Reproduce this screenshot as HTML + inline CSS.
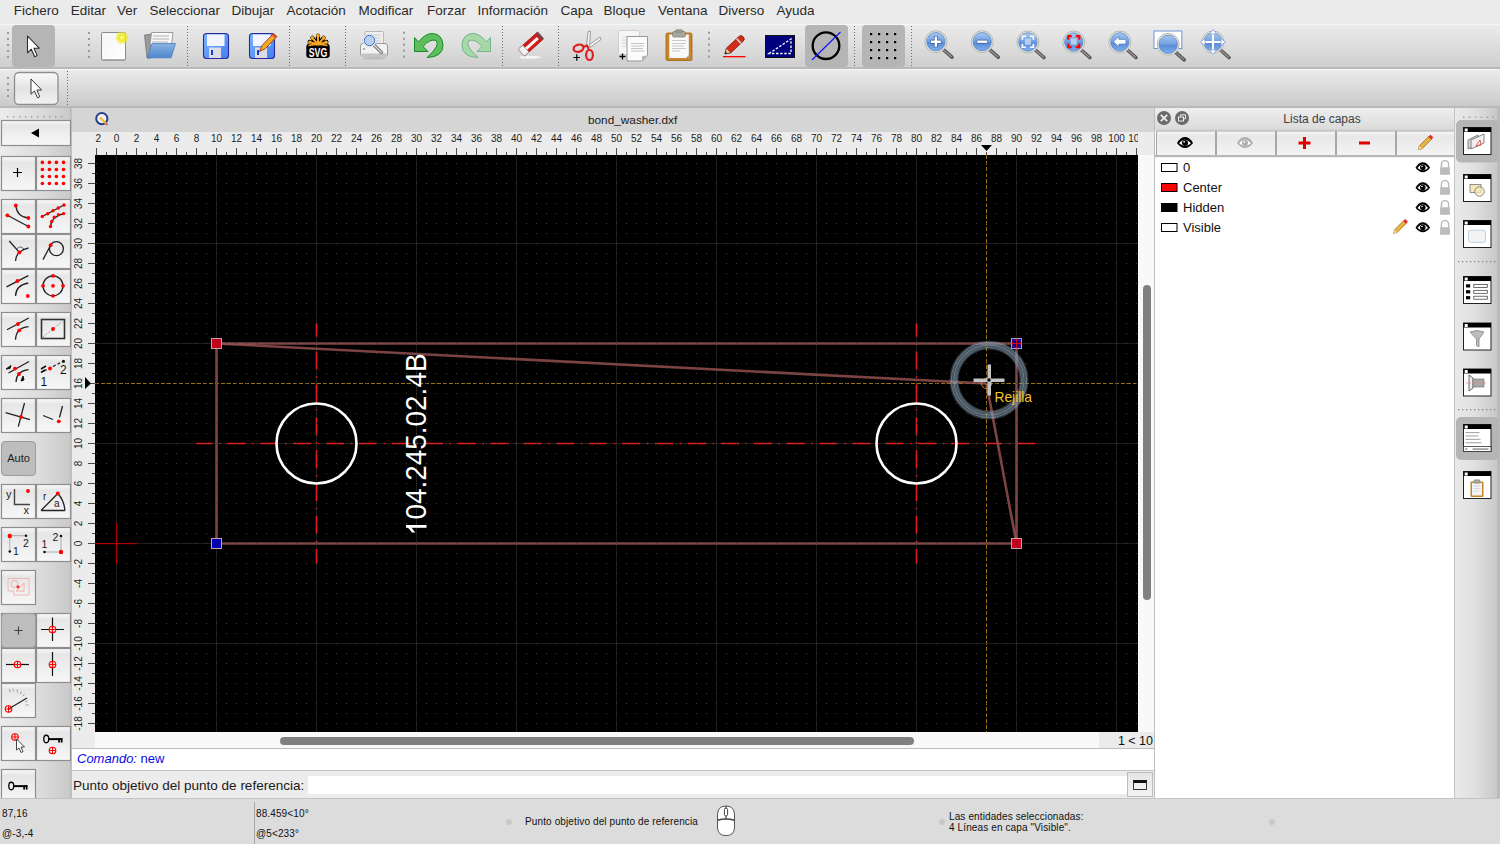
<!DOCTYPE html>
<html><head><meta charset="utf-8"><title>LibreCAD</title>
<style>
*{box-sizing:border-box}
html,body{margin:0;padding:0}
body{width:1500px;height:844px;overflow:hidden;position:relative;background:#ececec;font-family:"Liberation Sans",sans-serif;}
.abs{position:absolute}
#menubar{position:absolute;left:0;top:0;width:1500px;height:24px;background:#ebebeb}
.mi{position:absolute;top:2.8px;font-size:13.5px;line-height:16px;color:#2a2a2a;white-space:nowrap}
#tb1{position:absolute;left:0;top:24px;width:1500px;height:45px;background:linear-gradient(#f6f6f6 0px,#f6f6f6 1px,#ebebeb 1px,#cfcfcf 43px,#b9b9b9 43px,#b9b9b9 45px)}
#tb2{position:absolute;left:0;top:69px;width:1500px;height:39px;background:linear-gradient(#f6f6f6 0px,#f6f6f6 1px,#ebebeb 1px,#cacaca 37px,#b9b9b9 37px,#b9b9b9 39px)}
.handle{position:absolute;width:3px;background:radial-gradient(circle,#8a8a8a 0.9px,transparent 1.2px);background-size:3px 5.3px}
.vsep{position:absolute;width:2px;background:repeating-linear-gradient(#7a7a7a 0px,#7a7a7a 1px,transparent 1px,transparent 3px)}
.act{position:absolute;background:#b5b5b5;border-radius:4px}
#left{position:absolute;left:0;top:108px;width:72px;height:690px;background:linear-gradient(90deg,#e6e6e6,#d9d9d9 40px,#c8c8c8 69px,#b8b8b8 70px,#c2c2c2 72px)}
.lb{position:absolute;width:35px;height:35px;border:1px solid #8f8f8f;background:linear-gradient(#ffffff,#ececec)}
#mdi{position:absolute;left:72px;top:108px;width:1084px;height:690px;background:#ececec}
#dock{position:absolute;left:1155px;top:108px;width:300px;height:690px;background:#fff}
#rtb{position:absolute;left:1454px;top:108px;width:46px;height:690px;background:linear-gradient(90deg,#c9c9c9 0px,#e9e9e9 1px,#e2e2e2 20px,#cdcdcd 43px,#b9b9b9 46px)}
#status{position:absolute;left:0;top:797px;width:1500px;height:47px;background:#dcdcdc}
</style></head>
<body>
<div id="menubar"><span class="mi" style="left:13.7px">Fichero</span><span class="mi" style="left:70.7px">Editar</span><span class="mi" style="left:117.0px">Ver</span><span class="mi" style="left:149.5px">Seleccionar</span><span class="mi" style="left:231.4px">Dibujar</span><span class="mi" style="left:286.6px">Acotación</span><span class="mi" style="left:358.6px">Modificar</span><span class="mi" style="left:427.0px">Forzar</span><span class="mi" style="left:477.4px">Información</span><span class="mi" style="left:560.4px">Capa</span><span class="mi" style="left:603.4px">Bloque</span><span class="mi" style="left:658.0px">Ventana</span><span class="mi" style="left:718.6px">Diverso</span><span class="mi" style="left:776.6px">Ayuda</span></div>
<div id="tb1"></div><div id="tb2"></div>
<svg class="abs" style="left:0;top:0" width="1500" height="108">
<defs><linearGradient id="lens" x1="0" y1="0" x2="0" y2="1"><stop offset="0" stop-color="#a8c8f0"/><stop offset="0.5" stop-color="#6f9fe0"/><stop offset="0.55" stop-color="#5a8ad6"/><stop offset="1" stop-color="#7fb0ec"/></linearGradient><linearGradient id="flop" x1="0" y1="0" x2="1" y2="1"><stop offset="0" stop-color="#7fb4ff"/><stop offset="1" stop-color="#3f7ff0"/></linearGradient><linearGradient id="folder" x1="0" y1="0" x2="0" y2="1"><stop offset="0" stop-color="#8ab4e4"/><stop offset="1" stop-color="#4f86cc"/></linearGradient><linearGradient id="page" x1="0" y1="0" x2="1" y2="1"><stop offset="0" stop-color="#f4f4f4"/><stop offset="1" stop-color="#ffffff"/></linearGradient><radialGradient id="glow"><stop offset="0" stop-color="#ffffe0"/><stop offset="0.35" stop-color="#f2ec20"/><stop offset="0.7" stop-color="#efe820" stop-opacity="0.7"/><stop offset="1" stop-color="#f0e820" stop-opacity="0"/></radialGradient></defs>
<rect x="7" y="32" width="2" height="2" fill="#9a9a9a"/><rect x="7" y="38" width="2" height="2" fill="#9a9a9a"/><rect x="7" y="44" width="2" height="2" fill="#9a9a9a"/><rect x="7" y="50" width="2" height="2" fill="#9a9a9a"/><rect x="7" y="56" width="2" height="2" fill="#9a9a9a"/>
<rect x="12" y="25" width="43" height="42" rx="4" fill="#b5b5b5"/>
<path transform="translate(27.5,36) scale(1.05)" d="M0,0 L0,16 L3.6,12.6 L6.9,19.8 L9.2,18.7 L6.2,11.6 L11.2,11.6 Z" fill="#fff" stroke="#2a2a2a" stroke-width="1" stroke-linejoin="round"/>
<rect x="88" y="32" width="2" height="2" fill="#9a9a9a"/><rect x="88" y="38" width="2" height="2" fill="#9a9a9a"/><rect x="88" y="44" width="2" height="2" fill="#9a9a9a"/><rect x="88" y="50" width="2" height="2" fill="#9a9a9a"/><rect x="88" y="56" width="2" height="2" fill="#9a9a9a"/>
<rect x="101.5" y="32.5" width="24" height="27.5" rx="1" fill="url(#page)" stroke="#8a8a8a" stroke-width="1"/>
<rect x="102" y="59.5" width="23" height="1.2" fill="#9a9a9a"/>
<circle cx="122" cy="37.7" r="7" fill="url(#glow)"/>
<path d="M144.5,35 L152,34 L151,58 L147,58 Z" fill="#9a9a9a" stroke="#777" stroke-width="0.8"/>
<path d="M151.5,32.5 L173,32.5 L171.5,45 L150,45 Z" fill="#f8f8f8" stroke="#888" stroke-width="0.8"/>
<path d="M153,36 H169 M152.5,39 H169 M152,42 H168" stroke="#b0b0b0" stroke-width="1.2"/>
<path d="M152,43.5 L175.5,43.5 L171,57.8 L147,57.8 Z" fill="url(#folder)" stroke="#4a7cc0" stroke-width="0.8"/>
<line x1="187.5" y1="26" x2="187.5" y2="66" stroke="#6a6a6a" stroke-width="1" stroke-dasharray="1 2"/>
<rect x="203.5" y="33.5" width="25" height="25" rx="3" fill="url(#flop)" stroke="#2a2a9a" stroke-width="1.1"/><rect x="207" y="34.5" width="17.5" height="11.5" fill="#f2f4ff"/><rect x="209" y="47.5" width="12" height="10.5" fill="#dcdce6"/><rect x="211" y="50" width="2" height="5" fill="#1a3acc"/>
<rect x="249.5" y="33.5" width="25" height="25" rx="3" fill="url(#flop)" stroke="#2a2a9a" stroke-width="1.1"/><rect x="253" y="34.5" width="17.5" height="11.5" fill="#f2f4ff"/><rect x="255" y="47.5" width="12" height="10.5" fill="#dcdce6"/><rect x="257" y="50" width="2" height="5" fill="#1a3acc"/>
<path d="M259.5,51.5 L262,45.5 L273.5,33.5 L277,36.5 L265.5,48.5 Z" fill="#f5a623" stroke="#9a3a10" stroke-width="0.9"/>
<path d="M272.5,34.5 L276,37.5" stroke="#e04040" stroke-width="2"/>
<line x1="289.5" y1="26" x2="289.5" y2="66" stroke="#6a6a6a" stroke-width="1" stroke-dasharray="1 2"/>
<g stroke="#000" stroke-width="4.2" stroke-linecap="round"><path d="M318,45 L318,35.5 M318,45 L312.3,37.8 M318,45 L323.7,37.8 M318,45 L309.6,42 M318,45 L326.4,42"/></g>
<rect x="306.3" y="43.7" width="23.4" height="14.3" rx="3.2" fill="#000"/>
<g stroke="#f6a623" stroke-width="2" stroke-linecap="round"><path d="M318,44.5 L318,35.8 M318,44.5 L312.5,38.2 M318,44.5 L323.5,38.2 M318,44.5 L310,42.3 M318,44.5 L326,42.3"/></g>
<g fill="#f6a623"><circle cx="318" cy="35.6" r="1.9"/><circle cx="312.3" cy="37.9" r="1.8"/><circle cx="323.7" cy="37.9" r="1.8"/><circle cx="309.8" cy="42.2" r="1.6"/><circle cx="326.2" cy="42.2" r="1.6"/></g>
<path d="M308.5,45.5 Q318,43.3 327.5,45.5" stroke="#f6a623" stroke-width="1.6" fill="none"/>
<text x="318" y="56.8" text-anchor="middle" font-family="Liberation Sans, sans-serif" font-weight="bold" font-size="13" fill="#fff" textLength="18.5" lengthAdjust="spacingAndGlyphs">SVG</text>
<line x1="345.5" y1="26" x2="345.5" y2="66" stroke="#6a6a6a" stroke-width="1" stroke-dasharray="1 2"/>
<rect x="365" y="31.5" width="18.5" height="14" rx="1" fill="#efefef" stroke="#b0b0b0" stroke-width="0.9"/>
<path d="M372,35 H381 M372,38 H381 M374,41 H381" stroke="#d0d0d0" stroke-width="1"/>
<rect x="360.5" y="43.5" width="27" height="13" rx="2.5" fill="#f2f2f2" stroke="#9a9a9a" stroke-width="1"/>
<rect x="361" y="53.5" width="26" height="3.5" rx="1.5" fill="#c4c4c4"/>
<ellipse cx="374" cy="58.3" rx="12" ry="1.2" fill="#aaa" opacity="0.6"/>
<circle cx="364" cy="49" r="0.8" fill="#555"/>
<line x1="373.5" y1="44.5" x2="381.5" y2="52.5" stroke="#777" stroke-width="3.2" stroke-linecap="round"/>
<line x1="373.5" y1="44.5" x2="381.5" y2="52.5" stroke="#d8d8d8" stroke-width="1.3" stroke-linecap="round"/>
<circle cx="369.5" cy="40.5" r="6.6" fill="#fff" stroke="#c8c8c8" stroke-width="0.6"/>
<circle cx="369.5" cy="40.5" r="5.2" fill="#b8d0ee" stroke="#3a6cc0" stroke-width="1"/>
<rect x="403" y="31.700000000000003" width="2" height="2" fill="#9a9a9a"/><rect x="403" y="37.7" width="2" height="2" fill="#9a9a9a"/><rect x="403" y="43.7" width="2" height="2" fill="#9a9a9a"/><rect x="403" y="49.7" width="2" height="2" fill="#9a9a9a"/><rect x="403" y="55.7" width="2" height="2" fill="#9a9a9a"/>
<path d="M414.5,37.5 L414.5,51.5 L428,51.5 L423,46.5 Q430,38.5 436,40.5 Q441,45 427,57.5 Q443,57 443,45 Q442,33.5 432,33.5 Q425,33.5 418.5,42 Z" fill="#5cbf5c" stroke="#178a2a" stroke-width="1"/>
<path d="M414.5,37.5 L414.5,51.5 L428,51.5 L423,46.5 Q430,38.5 436,40.5 Q441,45 427,57.5 Q443,57 443,45 Q442,33.5 432,33.5 Q425,33.5 418.5,42 Z" transform="translate(905,0) scale(-1,1)" fill="#a8d8a8" stroke="#6fb48a" stroke-width="1"/>
<line x1="502.5" y1="26" x2="502.5" y2="66" stroke="#6a6a6a" stroke-width="1" stroke-dasharray="1 2"/>
<ellipse cx="530" cy="57.3" rx="11" ry="1.5" fill="#fff" opacity="0.8"/>
<g transform="translate(531,44) rotate(-42)"><rect x="-13" y="-4.6" width="26" height="9.2" rx="1" fill="#d81818" stroke="#8a1010" stroke-width="0.6"/><rect x="-13" y="-1.2" width="22" height="2.8" fill="#fafafa"/><rect x="-13" y="-4.6" width="6" height="9.2" fill="#f2f2f2" stroke="#999" stroke-width="0.6"/><rect x="11" y="-4.6" width="2" height="9.2" fill="#555"/></g>
<line x1="558.5" y1="26" x2="558.5" y2="66" stroke="#6a6a6a" stroke-width="1" stroke-dasharray="1 2"/>
<path d="M586.5,46 L588,31.5 L590.5,31 L589.5,47 Z" fill="#f4f4f4" stroke="#888" stroke-width="0.8"/>
<path d="M589,45 L600,37 L601,39.5 L590,47.5 Z" fill="#f4f4f4" stroke="#888" stroke-width="0.8"/>
<ellipse cx="578.5" cy="48.2" rx="5" ry="3.5" transform="rotate(-15 578.5 48.2)" fill="none" stroke="#e02020" stroke-width="2.2"/>
<ellipse cx="589.5" cy="55" rx="3.4" ry="5" fill="none" stroke="#e02020" stroke-width="2.2"/>
<path d="M583,47 L587,45.5 L589,50" stroke="#e02020" stroke-width="2" fill="none"/>
<path d="M573.5,57.5 H580 M576.8,54.3 V60.8" stroke="#000" stroke-width="1.2"/>
<rect x="618.5" y="30.5" width="21" height="24" rx="1.2" fill="#f6f6f6" stroke="#c6c6c6" stroke-width="0.8"/>
<path d="M622,37 H634 M622,40 H634 M622,43 H634 M622,46 H634" stroke="#d6d6d6" stroke-width="1"/>
<path d="M627,36.5 H647.5 V55.5 L642,61 H627 Z" fill="#fbfbfb" stroke="#8e8e8e" stroke-width="0.9"/>
<path d="M642,61 L642,56 L647.5,55.5 Z" fill="#b8b8b8"/>
<path d="M631,43.5 H644.5 M631,46 H644 M631,48.5 H643 M631,51 H644.5" stroke="#c4c4c4" stroke-width="1"/>
<path d="M619.5,56.5 H625.5 M622.5,53.5 V59.5" stroke="#000" stroke-width="1.3"/>
<rect x="666" y="33" width="26" height="27.5" rx="1.5" fill="#c7862a" stroke="#9a6018" stroke-width="0.8"/>
<rect x="669.3" y="34.5" width="19.5" height="23.5" fill="#fafafa"/>
<path d="M686,58 L688.8,55 V58 Z" fill="#999"/>
<path d="M672,40.5 H686 M672,43.5 H686 M672,46 H684 M672,48.5 H686 M672,51 H680" stroke="#c8c8c8" stroke-width="1"/>
<rect x="672.5" y="31.5" width="13" height="5.5" rx="1.5" fill="#a8a89a" stroke="#7a7a70" stroke-width="0.7"/>
<rect x="675.5" y="29.7" width="7" height="2.5" rx="0.8" fill="#a0a094" stroke="#7a7a70" stroke-width="0.6"/>
<rect x="708" y="31.700000000000003" width="2" height="2" fill="#9a9a9a"/><rect x="708" y="37.7" width="2" height="2" fill="#9a9a9a"/><rect x="708" y="43.7" width="2" height="2" fill="#9a9a9a"/><rect x="708" y="49.7" width="2" height="2" fill="#9a9a9a"/><rect x="708" y="55.7" width="2" height="2" fill="#9a9a9a"/>
<rect x="723" y="56" width="22.5" height="1.3" fill="#f00"/>
<g transform="translate(734.5,45) rotate(-43)"><path d="M-13,0 L-8,-3.2 L9,-3.2 Q12,-3.2 12,0 Q12,3.2 9,3.2 L-8,3.2 Z" fill="#d82a18" stroke="#6a2a10" stroke-width="0.8"/><path d="M-13,0 L-8,-3.2 L-8,3.2 Z" fill="#f0c8a0" stroke="#6a2a10" stroke-width="0.6"/><path d="M-13,0 L-11,-1.3 L-11,1.3 Z" fill="#222"/><rect x="5" y="-3.2" width="1.8" height="6.4" fill="#c8c8c8"/></g>
<rect x="765.5" y="35.5" width="29" height="22" fill="#00007e" stroke="#111" stroke-width="1"/>
<path d="M769,53.5 L791,39 L791,53.5 Z" fill="none" stroke="#fff" stroke-width="1.3" stroke-dasharray="2.5 1.6"/>
<rect x="805" y="25" width="43" height="42" rx="4" fill="#b5b5b5"/>
<circle cx="826" cy="45.7" r="13.3" fill="none" stroke="#000" stroke-width="2.3"/>
<line x1="812" y1="60" x2="840.5" y2="32" stroke="#1010ff" stroke-width="1.1"/>
<line x1="854.5" y1="26" x2="854.5" y2="66" stroke="#6a6a6a" stroke-width="1" stroke-dasharray="1 2"/>
<rect x="862" y="25" width="43" height="42" rx="4" fill="#b5b5b5"/>
<rect x="870" y="33" width="2.2" height="2.2" fill="#000"/>
<rect x="870" y="41" width="2.2" height="2.2" fill="#000"/>
<rect x="870" y="49" width="2.2" height="2.2" fill="#000"/>
<rect x="870" y="57" width="2.2" height="2.2" fill="#000"/>
<rect x="878" y="33" width="2.2" height="2.2" fill="#000"/>
<rect x="878" y="41" width="2.2" height="2.2" fill="#000"/>
<rect x="878" y="49" width="2.2" height="2.2" fill="#000"/>
<rect x="878" y="57" width="2.2" height="2.2" fill="#000"/>
<rect x="886" y="33" width="2.2" height="2.2" fill="#000"/>
<rect x="886" y="41" width="2.2" height="2.2" fill="#000"/>
<rect x="886" y="49" width="2.2" height="2.2" fill="#000"/>
<rect x="886" y="57" width="2.2" height="2.2" fill="#000"/>
<rect x="894" y="33" width="2.2" height="2.2" fill="#000"/>
<rect x="894" y="41" width="2.2" height="2.2" fill="#000"/>
<rect x="894" y="49" width="2.2" height="2.2" fill="#000"/>
<rect x="894" y="57" width="2.2" height="2.2" fill="#000"/>
<line x1="911.5" y1="26" x2="911.5" y2="66" stroke="#6a6a6a" stroke-width="1" stroke-dasharray="1 2"/>
<line x1="943.4" y1="49.7" x2="951.9" y2="57.2" stroke="#555" stroke-width="3.6" stroke-linecap="round"/><line x1="943.9" y1="50.2" x2="951.4" y2="56.7" stroke="#999" stroke-width="1.2" stroke-linecap="round"/><circle cx="935.9" cy="41.7" r="11" fill="#e6e6de" stroke="#b8b8ae" stroke-width="1"/><circle cx="935.9" cy="41.7" r="9.2" fill="url(#lens)" stroke="#5a88c8" stroke-width="0.8"/><path d="M930.4,41.7 H941.4 M935.9,36.2 V47.2" stroke="#3a5fa0" stroke-width="4"/><path d="M930.9,41.7 H940.9 M935.9,36.7 V46.7" stroke="#fff" stroke-width="2.4"/>
<line x1="989.7" y1="49.7" x2="998.2" y2="57.2" stroke="#555" stroke-width="3.6" stroke-linecap="round"/><line x1="990.2" y1="50.2" x2="997.7" y2="56.7" stroke="#999" stroke-width="1.2" stroke-linecap="round"/><circle cx="982.2" cy="41.7" r="11" fill="#e6e6de" stroke="#b8b8ae" stroke-width="1"/><circle cx="982.2" cy="41.7" r="9.2" fill="url(#lens)" stroke="#5a88c8" stroke-width="0.8"/><path d="M976.7,41.7 H987.7" stroke="#3a5fa0" stroke-width="4"/><path d="M977.2,41.7 H987.2" stroke="#fff" stroke-width="2.4"/>
<line x1="1035.4" y1="50" x2="1043.9" y2="57.5" stroke="#555" stroke-width="3.6" stroke-linecap="round"/><line x1="1035.9" y1="50.5" x2="1043.4" y2="57" stroke="#999" stroke-width="1.2" stroke-linecap="round"/><circle cx="1027.9" cy="42" r="11" fill="#e6e6de" stroke="#b8b8ae" stroke-width="1"/><circle cx="1027.9" cy="42" r="9.2" fill="url(#lens)" stroke="#5a88c8" stroke-width="0.8"/><rect x="1024.9" y="38.7" width="6" height="6" fill="#b8d0f0"/><path d="M1022.4000000000001,39.7 V36.2 H1025.9 M1029.9,36.2 H1033.4 V39.7 M1033.4,43.7 V47.2 H1029.9 M1025.9,47.2 H1022.4000000000001 V43.7" stroke="#fff" stroke-width="1.6" fill="none"/>
<line x1="1081.3" y1="50" x2="1089.8" y2="57.5" stroke="#555" stroke-width="3.6" stroke-linecap="round"/><line x1="1081.8" y1="50.5" x2="1089.3" y2="57" stroke="#999" stroke-width="1.2" stroke-linecap="round"/><circle cx="1073.8" cy="42" r="11" fill="#e6e6de" stroke="#b8b8ae" stroke-width="1"/><circle cx="1073.8" cy="42" r="9.2" fill="url(#lens)" stroke="#5a88c8" stroke-width="0.8"/><rect x="1070.8" y="38.7" width="6" height="6" fill="#b8d0f0"/><path d="M1068.3,39.7 V36.2 H1071.8 M1075.8,36.2 H1079.3 V39.7 M1079.3,43.7 V47.2 H1075.8 M1071.8,47.2 H1068.3 V43.7" stroke="#f00" stroke-width="2.2" fill="none"/>
<line x1="1127.4" y1="50" x2="1135.9" y2="57.5" stroke="#555" stroke-width="3.6" stroke-linecap="round"/><line x1="1127.9" y1="50.5" x2="1135.4" y2="57" stroke="#999" stroke-width="1.2" stroke-linecap="round"/><circle cx="1119.9" cy="42" r="11" fill="#e6e6de" stroke="#b8b8ae" stroke-width="1"/><circle cx="1119.9" cy="42" r="9.2" fill="url(#lens)" stroke="#5a88c8" stroke-width="0.8"/><path d="M1113.4,41.7 L1118.9,36.7 V39.400000000000006 H1125.9 V44.0 H1118.9 V46.7 Z" fill="#fff" stroke="#4a6fb0" stroke-width="0.6"/>
<rect x="1154" y="31" width="27.8" height="17.5" fill="#fff" stroke="#6a94d8" stroke-width="1"/>
<line x1="1175.7" y1="52.4" x2="1184.2" y2="59.9" stroke="#555" stroke-width="3.6" stroke-linecap="round"/><line x1="1176.2" y1="52.9" x2="1183.7" y2="59.4" stroke="#999" stroke-width="1.2" stroke-linecap="round"/><circle cx="1168.2" cy="44.4" r="11" fill="#e6e6de" stroke="#b8b8ae" stroke-width="1"/><circle cx="1168.2" cy="44.4" r="9.2" fill="url(#lens)" stroke="#5a88c8" stroke-width="0.8"/>
<line x1="1220.5" y1="50" x2="1229" y2="57.5" stroke="#555" stroke-width="3.6" stroke-linecap="round"/><line x1="1221" y1="50.5" x2="1228.5" y2="57" stroke="#999" stroke-width="1.2" stroke-linecap="round"/><circle cx="1213" cy="42" r="11" fill="#e6e6de" stroke="#b8b8ae" stroke-width="1"/><circle cx="1213" cy="42" r="9.2" fill="url(#lens)" stroke="#5a88c8" stroke-width="0.8"/>
<path d="M1213,31 V53 M1202,42 H1224" stroke="#fff" stroke-width="2"/>
<path d="M1213,29.5 L1209.5,34 L1216.5,34 Z" fill="#fff" stroke="#6a94d8" stroke-width="0.7"/>
<path d="M1213,54.5 L1209.5,50 L1216.5,50 Z" fill="#fff" stroke="#6a94d8" stroke-width="0.7"/>
<path d="M1200.5,42 L1205,38.5 L1205,45.5 Z" fill="#fff" stroke="#6a94d8" stroke-width="0.7"/>
<path d="M1225.5,42 L1221,38.5 L1221,45.5 Z" fill="#fff" stroke="#6a94d8" stroke-width="0.7"/>
<rect x="7" y="77" width="2" height="2" fill="#9a9a9a"/><rect x="7" y="83" width="2" height="2" fill="#9a9a9a"/><rect x="7" y="89" width="2" height="2" fill="#9a9a9a"/><rect x="7" y="95" width="2" height="2" fill="#9a9a9a"/>
<rect x="14.5" y="72.5" width="43.5" height="32" rx="4.5" fill="url(#tb2btn)" stroke="#8e8e8e" stroke-width="1.3"/>
<defs><linearGradient id="tb2btn" x1="0" y1="0" x2="0" y2="1"><stop offset="0" stop-color="#fafafa"/><stop offset="0.5" stop-color="#e4e4e4"/><stop offset="1" stop-color="#f2f2f2"/></linearGradient></defs>
<path transform="translate(31,79) scale(0.95)" d="M0,0 L0,16 L3.6,12.6 L6.9,19.8 L9.2,18.7 L6.2,11.6 L11.2,11.6 Z" fill="#fff" stroke="#2a2a2a" stroke-width="1" stroke-linejoin="round"/>
<line x1="67.5" y1="71" x2="67.5" y2="106" stroke="#6a6a6a" stroke-width="1" stroke-dasharray="1 2"/>
</svg>
<svg class="abs" style="left:0;top:0" width="72" height="800">
<defs><linearGradient id="lbg" x1="0" y1="0" x2="0" y2="1"><stop offset="0" stop-color="#fafafa"/><stop offset="0.18" stop-color="#e6e6e6"/><stop offset="0.55" stop-color="#eeeeee"/><stop offset="1" stop-color="#f7f7f7"/></linearGradient><linearGradient id="pbg" x1="0" y1="0" x2="1" y2="0"><stop offset="0" stop-color="#ececec"/><stop offset="0.6" stop-color="#dadada"/><stop offset="0.97" stop-color="#c9c9c9"/><stop offset="0.98" stop-color="#bababa"/><stop offset="1" stop-color="#c4c4c4"/></linearGradient></defs>
<rect x="0" y="108" width="72" height="690" fill="url(#pbg)"/>
<rect x="7.0" y="116" width="1.4" height="1.4" fill="#9a9a9a"/>
<rect x="13.0" y="116" width="1.4" height="1.4" fill="#9a9a9a"/>
<rect x="19.0" y="116" width="1.4" height="1.4" fill="#9a9a9a"/>
<rect x="25.0" y="116" width="1.4" height="1.4" fill="#9a9a9a"/>
<rect x="31.0" y="116" width="1.4" height="1.4" fill="#9a9a9a"/>
<rect x="37.0" y="116" width="1.4" height="1.4" fill="#9a9a9a"/>
<rect x="43.0" y="116" width="1.4" height="1.4" fill="#9a9a9a"/>
<rect x="49.0" y="116" width="1.4" height="1.4" fill="#9a9a9a"/>
<rect x="55.0" y="116" width="1.4" height="1.4" fill="#9a9a9a"/>
<rect x="61.0" y="116" width="1.4" height="1.4" fill="#9a9a9a"/>
<rect x="1.5" y="120.5" width="69" height="25" fill="url(#lbg)" stroke="#8e8e8e" stroke-width="1.2"/>
<path d="M31,133 L39,128.5 L39,137.5 Z" fill="#000"/>
<rect x="1.5" y="156.5" width="34" height="34" fill="url(#lbg)" stroke="#8e8e8e" stroke-width="1.2"/>
<rect x="36.5" y="156.5" width="34" height="34" fill="url(#lbg)" stroke="#8e8e8e" stroke-width="1.2"/>
<rect x="1.5" y="199.5" width="34" height="34" fill="url(#lbg)" stroke="#8e8e8e" stroke-width="1.2"/>
<rect x="36.5" y="199.5" width="34" height="34" fill="url(#lbg)" stroke="#8e8e8e" stroke-width="1.2"/>
<rect x="1.5" y="234.5" width="34" height="34" fill="url(#lbg)" stroke="#8e8e8e" stroke-width="1.2"/>
<rect x="36.5" y="234.5" width="34" height="34" fill="url(#lbg)" stroke="#8e8e8e" stroke-width="1.2"/>
<rect x="1.5" y="269.5" width="34" height="34" fill="url(#lbg)" stroke="#8e8e8e" stroke-width="1.2"/>
<rect x="36.5" y="269.5" width="34" height="34" fill="url(#lbg)" stroke="#8e8e8e" stroke-width="1.2"/>
<rect x="1.5" y="312.5" width="34" height="34" fill="url(#lbg)" stroke="#8e8e8e" stroke-width="1.2"/>
<rect x="36.5" y="312.5" width="34" height="34" fill="url(#lbg)" stroke="#8e8e8e" stroke-width="1.2"/>
<rect x="1.5" y="355.5" width="34" height="34" fill="url(#lbg)" stroke="#8e8e8e" stroke-width="1.2"/>
<rect x="36.5" y="355.5" width="34" height="34" fill="url(#lbg)" stroke="#8e8e8e" stroke-width="1.2"/>
<rect x="1.5" y="398.5" width="34" height="34" fill="url(#lbg)" stroke="#8e8e8e" stroke-width="1.2"/>
<rect x="36.5" y="398.5" width="34" height="34" fill="url(#lbg)" stroke="#8e8e8e" stroke-width="1.2"/>
<rect x="1.5" y="484.5" width="34" height="34" fill="url(#lbg)" stroke="#8e8e8e" stroke-width="1.2"/>
<rect x="36.5" y="484.5" width="34" height="34" fill="url(#lbg)" stroke="#8e8e8e" stroke-width="1.2"/>
<rect x="1.5" y="527.5" width="34" height="34" fill="url(#lbg)" stroke="#8e8e8e" stroke-width="1.2"/>
<rect x="36.5" y="527.5" width="34" height="34" fill="url(#lbg)" stroke="#8e8e8e" stroke-width="1.2"/>
<rect x="1.5" y="613.5" width="34" height="34" fill="url(#lbg)" stroke="#8e8e8e" stroke-width="1.2"/>
<rect x="36.5" y="613.5" width="34" height="34" fill="url(#lbg)" stroke="#8e8e8e" stroke-width="1.2"/>
<rect x="1.5" y="648.5" width="34" height="34" fill="url(#lbg)" stroke="#8e8e8e" stroke-width="1.2"/>
<rect x="36.5" y="648.5" width="34" height="34" fill="url(#lbg)" stroke="#8e8e8e" stroke-width="1.2"/>
<rect x="1.5" y="726.5" width="34" height="34" fill="url(#lbg)" stroke="#8e8e8e" stroke-width="1.2"/>
<rect x="36.5" y="726.5" width="34" height="34" fill="url(#lbg)" stroke="#8e8e8e" stroke-width="1.2"/>
<rect x="1.5" y="570.5" width="34" height="34" fill="url(#lbg)" stroke="#8e8e8e" stroke-width="1.2"/>
<rect x="1.5" y="683.5" width="34" height="34" fill="url(#lbg)" stroke="#8e8e8e" stroke-width="1.2"/>
<rect x="1.5" y="769.5" width="34" height="34" fill="url(#lbg)" stroke="#8e8e8e" stroke-width="1.2"/>
<rect x="1.5" y="441.5" width="34" height="34" rx="3.5" fill="#bdbdbd" stroke="#9c9c9c" stroke-width="1"/>
<text x="18.5" y="462" text-anchor="middle" font-family="Liberation Sans, sans-serif" font-size="11" fill="#222">Auto</text>
<rect x="1.5" y="613.5" width="34" height="34" rx="3.5" fill="#bdbdbd" stroke="#9c9c9c" stroke-width="1"/>
<path d="M14.5,630.5 H22.5 M18.5,626.5 V634.5" stroke="#444" stroke-width="1.1"/>
<path d="M13,172.5 H22 M17.5,168 V177" stroke="#000" stroke-width="1.2"/>
<circle cx="42.4" cy="162.4" r="1.8" fill="#ff0000"/>
<circle cx="42.4" cy="169.5" r="1.8" fill="#ff0000"/>
<circle cx="42.4" cy="176.5" r="1.8" fill="#ff0000"/>
<circle cx="42.4" cy="183.5" r="1.8" fill="#ff0000"/>
<circle cx="49.4" cy="162.4" r="1.8" fill="#ff0000"/>
<circle cx="49.4" cy="169.5" r="1.8" fill="#ff0000"/>
<circle cx="49.4" cy="176.5" r="1.8" fill="#ff0000"/>
<circle cx="49.4" cy="183.5" r="1.8" fill="#ff0000"/>
<circle cx="56.4" cy="162.4" r="1.8" fill="#ff0000"/>
<circle cx="56.4" cy="169.5" r="1.8" fill="#ff0000"/>
<circle cx="56.4" cy="176.5" r="1.8" fill="#ff0000"/>
<circle cx="56.4" cy="183.5" r="1.8" fill="#ff0000"/>
<circle cx="63.5" cy="162.4" r="1.8" fill="#ff0000"/>
<circle cx="63.5" cy="169.5" r="1.8" fill="#ff0000"/>
<circle cx="63.5" cy="176.5" r="1.8" fill="#ff0000"/>
<circle cx="63.5" cy="183.5" r="1.8" fill="#ff0000"/>
<path d="M7.4,215.3 L28.4,226.5" stroke="#222" stroke-width="1.3" fill="none"/><path d="M15.8,205.5 Q17,217 28.4,218" stroke="#222" stroke-width="1.3" fill="none"/>
<circle cx="15.8" cy="205.5" r="1.9" fill="#ff0000"/><circle cx="28.4" cy="218" r="1.9" fill="#ff0000"/><circle cx="7.4" cy="215.3" r="1.9" fill="#ff0000"/><circle cx="28.4" cy="226.5" r="1.9" fill="#ff0000"/>
<path d="M42.3,216.5 L64,205 M50.5,226.5 Q51,217 63.6,213.6" stroke="#222" stroke-width="1.3" fill="none"/>
<circle cx="42.3" cy="216.5" r="1.7" fill="#ff0000"/>
<circle cx="47.6" cy="213.7" r="1.7" fill="#ff0000"/>
<circle cx="53" cy="210.8" r="1.7" fill="#ff0000"/>
<circle cx="58.3" cy="208" r="1.7" fill="#ff0000"/>
<circle cx="64" cy="205" r="1.7" fill="#ff0000"/>
<circle cx="50.5" cy="226.5" r="1.7" fill="#ff0000"/>
<circle cx="51.7" cy="221.4" r="1.7" fill="#ff0000"/>
<circle cx="54.3" cy="217.2" r="1.7" fill="#ff0000"/>
<circle cx="58.5" cy="214.7" r="1.7" fill="#ff0000"/>
<circle cx="63.6" cy="213.6" r="1.7" fill="#ff0000"/>
<path d="M9.3,241 L19.4,252.4 M15.5,261 Q16,255 19.4,252.4 Q23,249 28.5,248" stroke="#222" stroke-width="1.3" fill="none"/>
<path d="M16.8,249 Q20,245 24,249" stroke="#444" stroke-width="0.8" fill="none"/>
<circle cx="19.4" cy="252.4" r="1.9" fill="#ff0000"/>
<circle cx="56.4" cy="248.7" r="7" stroke="#222" stroke-width="1.3" fill="none"/><path d="M43,259.6 L50.6,245.2" stroke="#222" stroke-width="1.3" fill="none"/>
<circle cx="50.6" cy="245.2" r="1.9" fill="#ff0000"/>
<path d="M6.5,286.8 L28.3,275.6 M15.5,296 Q16,285 28.3,283" stroke="#222" stroke-width="1.3" fill="none"/>
<circle cx="17.4" cy="281" r="1.9" fill="#ff0000"/><circle cx="27.8" cy="296" r="1.9" fill="#ff0000"/>
<circle cx="53" cy="285.8" r="10" stroke="#222" stroke-width="1.3" fill="none"/>
<circle cx="53" cy="285.8" r="1.9" fill="#ff0000"/><circle cx="53" cy="275.8" r="1.9" fill="#ff0000"/><circle cx="53" cy="295.8" r="1.9" fill="#ff0000"/><circle cx="43" cy="285.8" r="1.9" fill="#ff0000"/><circle cx="63" cy="285.8" r="1.9" fill="#ff0000"/>
<path d="M7,329.8 L28.8,318 M15.5,339.8 Q16,328 28.5,326.7" stroke="#222" stroke-width="1.3" fill="none"/>
<circle cx="18" cy="324" r="1.9" fill="#ff0000"/><circle cx="19.3" cy="330.3" r="1.9" fill="#ff0000"/>
<rect x="41.5" y="319.5" width="23" height="19" fill="none" stroke="#333" stroke-width="1.6"/>
<path d="M43,337 L63,321" stroke="#888" stroke-width="0.8" stroke-dasharray="2 1.5"/>
<circle cx="53" cy="329" r="1.9" fill="#ff0000"/>
<path d="M8.5,373 L29,361.5 M16,382 Q16.5,371 28.5,369.7" stroke="#222" stroke-width="1.3" fill="none"/>
<path d="M6,369 L11,365.5 L10,368.5 Z M21,381 L23,376 L24,380 Z" fill="#111" stroke="#111" stroke-width="1"/>
<circle cx="15" cy="368.6" r="1.9" fill="#ff0000"/><circle cx="19" cy="374" r="1.9" fill="#ff0000"/>
<path d="M44,371 L64,361" stroke="#222" stroke-width="1.3" stroke-dasharray="3 2"/>
<path d="M41,369 L46,366 M41,372.5 L45,370" stroke="#111" stroke-width="1.6"/>
<circle cx="63.5" cy="361.3" r="1.5" fill="#111"/>
<circle cx="50" cy="368.5" r="1.9" fill="#ff0000"/>
<text x="40.5" y="385.5" font-family="Liberation Sans, sans-serif" font-size="12" fill="#111">1</text>
<text x="60" y="374" font-family="Liberation Sans, sans-serif" font-size="12" fill="#111">2</text>
<path d="M5.5,412.5 L30,419.5 M24.5,403 L18.3,426.6" stroke="#222" stroke-width="1.3" fill="none"/>
<circle cx="21" cy="417" r="1.9" fill="#ff0000"/>
<path d="M43,415.5 L53,419.5 M62.5,406 L59.5,417.5" stroke="#222" stroke-width="1.3" fill="none"/>
<circle cx="58.8" cy="421.3" r="1.9" fill="#ff0000"/>
<text x="6" y="498" font-family="Liberation Sans, sans-serif" font-size="11" fill="#222">y</text>
<path d="M14.5,489 V504.5 H30" stroke="#444" stroke-width="1.4" fill="none"/>
<text x="23.5" y="514" font-family="Liberation Sans, sans-serif" font-size="11" fill="#222">x</text>
<circle cx="28" cy="491" r="1.9" fill="#ff0000"/>
<path d="M41,510.5 L57.8,493.5 M41,510.5 H65 M57.8,493.5 Q64,500 65,510.5" stroke="#222" stroke-width="1.3" fill="none"/>
<text x="43" y="500" font-family="Liberation Sans, sans-serif" font-size="10" fill="#222">r</text>
<text x="54" y="507" font-family="Liberation Sans, sans-serif" font-size="10" fill="#222">a</text>
<circle cx="57.8" cy="493.5" r="1.9" fill="#ff0000"/>
<path d="M9.8,535.7 H26 M9.8,536 V551.5" stroke="#aaa" stroke-width="1"/>
<circle cx="26" cy="535.7" r="1.3" fill="#111"/><circle cx="9.8" cy="551.5" r="1.3" fill="#111"/>
<circle cx="9.8" cy="536" r="2.2" fill="#ff0000"/>
<text x="23" y="547" font-family="Liberation Sans, sans-serif" font-size="10.5" fill="#222">2</text>
<text x="13" y="555" font-family="Liberation Sans, sans-serif" font-size="10.5" fill="#222">1</text>
<path d="M44.5,552 H61 M61,536 V552" stroke="#aaa" stroke-width="1"/>
<circle cx="44.5" cy="552" r="1.3" fill="#111"/><circle cx="61" cy="536" r="1.3" fill="#111"/>
<circle cx="61" cy="552" r="2.2" fill="#ff0000"/>
<text x="41.5" y="548" font-family="Liberation Sans, sans-serif" font-size="10.5" fill="#222">1</text>
<text x="52.5" y="541" font-family="Liberation Sans, sans-serif" font-size="10.5" fill="#222">2</text>
<path d="M8,578.5 H29 V595 H14 V591 H8 Z" fill="none" stroke="#f0b0b0" stroke-width="0.9"/>
<circle cx="14.5" cy="584" r="3.5" fill="none" stroke="#f0a8a8" stroke-width="0.9"/><path d="M16,591 L24,583 V591 Z" fill="none" stroke="#f0a8a8" stroke-width="0.9"/>
<circle cx="18" cy="586.8" r="1.6" fill="#ff3030"/>
<path d="M41,629.5 H64 M52.5,617.5 V641" stroke="#111" stroke-width="1.2"/>
<circle cx="52.5" cy="629.5" r="3.3" fill="none" stroke="#f00" stroke-width="1.1"/><line x1="49.2" y1="629.5" x2="55.8" y2="629.5" stroke="#f00" stroke-width="1"/><line x1="52.5" y1="626.2" x2="52.5" y2="632.8" stroke="#f00" stroke-width="1"/>
<path d="M6,664.5 H29" stroke="#111" stroke-width="1.2"/><circle cx="17.5" cy="664.5" r="3.3" fill="none" stroke="#f00" stroke-width="1.1"/><line x1="14.2" y1="664.5" x2="20.8" y2="664.5" stroke="#f00" stroke-width="1"/><line x1="17.5" y1="661.2" x2="17.5" y2="667.8" stroke="#f00" stroke-width="1"/>
<path d="M52.5,652 V676" stroke="#111" stroke-width="1.2"/><circle cx="52.5" cy="664.5" r="3.3" fill="none" stroke="#f00" stroke-width="1.1"/><line x1="49.2" y1="664.5" x2="55.8" y2="664.5" stroke="#f00" stroke-width="1"/><line x1="52.5" y1="661.2" x2="52.5" y2="667.8" stroke="#f00" stroke-width="1"/>
<path d="M8.5,709 L27,698" stroke="#222" stroke-width="1.2"/>
<path d="M9.5,689 L10,692.5" stroke="#999" stroke-width="0.9"/>
<path d="M13,688.5 L13.5,691.5" stroke="#999" stroke-width="0.9"/>
<path d="M17,689.5 L17.5,692.5" stroke="#999" stroke-width="0.9"/>
<path d="M21,691.5 L20.5,694" stroke="#999" stroke-width="0.9"/>
<path d="M24.5,694 L23,696" stroke="#999" stroke-width="0.9"/>
<path d="M27.5,701 L25,702" stroke="#999" stroke-width="0.9"/>
<path d="M28.5,705 L25.5,705" stroke="#999" stroke-width="0.9"/>
<circle cx="8.5" cy="709" r="3.3" fill="none" stroke="#f00" stroke-width="1.1"/><line x1="5.2" y1="709" x2="11.8" y2="709" stroke="#f00" stroke-width="1"/><line x1="8.5" y1="705.7" x2="8.5" y2="712.3" stroke="#f00" stroke-width="1"/>
<circle cx="15" cy="737" r="3.3" fill="none" stroke="#f00" stroke-width="1.1"/><line x1="11.7" y1="737" x2="18.3" y2="737" stroke="#f00" stroke-width="1"/><line x1="15" y1="733.7" x2="15" y2="740.3" stroke="#f00" stroke-width="1"/>
<path d="M16.5,739 L16.5,750 L19,748 L21,752.5 L23,751.5 L21,747 L24.5,747 Z" fill="#fff" stroke="#333" stroke-width="0.9"/>
<g transform="translate(53.5,739) scale(0.85)"><ellipse cx="-8.5" cy="0" rx="2.9" ry="4.4" fill="none" stroke="#000" stroke-width="1.5"/><rect x="-5.6" y="-1" width="16" height="2.3" fill="#000"/><rect x="5.6" y="-1" width="2" height="5.2" fill="#000"/><rect x="8.6" y="-1" width="2" height="5.2" fill="#000"/></g><circle cx="52.5" cy="750.5" r="3.3" fill="none" stroke="#f00" stroke-width="1.1"/><line x1="49.2" y1="750.5" x2="55.8" y2="750.5" stroke="#f00" stroke-width="1"/><line x1="52.5" y1="747.2" x2="52.5" y2="753.8" stroke="#f00" stroke-width="1"/>
<g transform="translate(18.5,786) scale(0.85)"><ellipse cx="-8.5" cy="0" rx="2.9" ry="4.4" fill="none" stroke="#000" stroke-width="1.5"/><rect x="-5.6" y="-1" width="16" height="2.3" fill="#000"/><rect x="5.6" y="-1" width="2" height="5.2" fill="#000"/><rect x="8.6" y="-1" width="2" height="5.2" fill="#000"/></g>
</svg>
<div class="abs" style="left:72px;top:108px;width:1083px;height:24px;background:#d5d5d5"></div>
<div class="abs" style="left:72px;top:132px;width:1083px;height:616px;background:#ececec"></div>
<div class="abs" style="left:588px;top:107.5px;font-size:11.8px;line-height:24px;color:#1a1a1a;white-space:nowrap">bond_washer.dxf</div>
<svg class="abs" style="left:94px;top:111px" width="16" height="16"><circle cx="7.8" cy="7.6" r="5.6" fill="#f4f4f8" stroke="#24408a" stroke-width="2"/><path d="M4.5,8 H11 M7.8,4.5 V11" stroke="#c8c8d8" stroke-width="0.6"/><path d="M6,6.5 L12.5,13" stroke="#f0c020" stroke-width="2"/><path d="M11.8,12.3 L13.5,14" stroke="#e06060" stroke-width="2"/></svg>
<div class="abs" style="left:1138px;top:155px;width:16px;height:593px;background:#f9f9f9"></div>
<div class="abs" style="left:95px;top:732px;width:1004px;height:16px;background:#f9f9f9"></div>
<div class="abs" style="left:1143px;top:285px;width:8px;height:315px;background:#808080;border-radius:4px"></div>
<div class="abs" style="left:280px;top:737px;width:634px;height:8px;background:#808080;border-radius:4px"></div>
<div class="abs" style="left:1099px;top:732px;width:55px;height:16px;background:#ebebeb;font-size:12.5px;line-height:18px;text-align:right;color:#111;padding-right:1px">1 &lt; 10</div>
<div class="abs" style="left:72px;top:748px;width:1083px;height:1px;background:#bdbdbd"></div>
<div class="abs" style="left:1154px;top:108px;width:2px;height:690px;background:#bdbdbd"></div>
<div class="abs" style="left:72px;top:749px;width:1082px;height:22px;background:#fff;border-bottom:1px solid #c4c4c4"></div>
<div class="abs" style="left:77px;top:750px;font-size:13px;line-height:17px;color:#0a0ae6;white-space:nowrap"><i>Comando:</i> new</div>
<div class="abs" style="left:72px;top:771px;width:1082px;height:27px;background:#ececec"></div>
<div class="abs" style="left:73px;top:777px;font-size:13.5px;line-height:17px;color:#1a1a1a;white-space:nowrap">Punto objetivo del punto de referencia:</div>
<div class="abs" style="left:308px;top:776px;width:819px;height:18px;background:#fff"></div>
<div class="abs" style="left:1127px;top:772px;width:26px;height:25px;background:linear-gradient(#e6e6e6,#f2f2f2);border:1px solid #bdbdbd"></div>
<div class="abs" style="left:1133px;top:780px;width:14px;height:10px;border:1px solid #333;border-top:3px solid #111;background:#f0f0f0"></div>
<svg class="abs" style="left:0;top:0" width="1500" height="844" viewBox="0 0 1500 844">
<defs>
<pattern id="dots" x="0" y="0" width="10" height="10" patternUnits="userSpaceOnUse"><rect x="6" y="3" width="1" height="1" fill="#3e3e3e"/></pattern>
<clipPath id="cv"><rect x="95" y="155" width="1043" height="577"/></clipPath>
<clipPath id="hr"><rect x="95" y="132" width="1043" height="23"/></clipPath>
<clipPath id="vr"><rect x="72" y="155" width="23" height="577"/></clipPath>
<radialGradient id="ring" cx="0.5" cy="0.5" r="0.5"><stop offset="0.78" stop-color="#6f8294" stop-opacity="0"/><stop offset="0.82" stop-color="#6f8294" stop-opacity="0.75"/><stop offset="0.9" stop-color="#8a9cad" stop-opacity="0.9"/><stop offset="0.96" stop-color="#6f8294" stop-opacity="0.7"/><stop offset="1" stop-color="#6f8294" stop-opacity="0"/></radialGradient>
</defs>
<rect x="95" y="155" width="1043" height="577" fill="#000"/>
<g clip-path="url(#cv)">
<rect x="116" y="155" width="1" height="577" fill="#1d1d1d"/>
<rect x="216" y="155" width="1" height="577" fill="#1d1d1d"/>
<rect x="316" y="155" width="1" height="577" fill="#1d1d1d"/>
<rect x="416" y="155" width="1" height="577" fill="#1d1d1d"/>
<rect x="516" y="155" width="1" height="577" fill="#1d1d1d"/>
<rect x="616" y="155" width="1" height="577" fill="#1d1d1d"/>
<rect x="716" y="155" width="1" height="577" fill="#1d1d1d"/>
<rect x="816" y="155" width="1" height="577" fill="#1d1d1d"/>
<rect x="916" y="155" width="1" height="577" fill="#1d1d1d"/>
<rect x="1016" y="155" width="1" height="577" fill="#1d1d1d"/>
<rect x="1116" y="155" width="1" height="577" fill="#1d1d1d"/>
<rect x="95" y="643" width="1043" height="1" fill="#1d1d1d"/>
<rect x="95" y="543" width="1043" height="1" fill="#1d1d1d"/>
<rect x="95" y="443" width="1043" height="1" fill="#1d1d1d"/>
<rect x="95" y="343" width="1043" height="1" fill="#1d1d1d"/>
<rect x="95" y="243" width="1043" height="1" fill="#1d1d1d"/>
<line x1="986.5" y1="155" x2="986.5" y2="732" stroke="#9c720c" stroke-width="1" stroke-dasharray="4 2"/>
<line x1="95" y1="383.5" x2="1138" y2="383.5" stroke="#9c720c" stroke-width="1" stroke-dasharray="4 2"/>
<line x1="196" y1="443.5" x2="1036" y2="443.5" stroke="#f01818" stroke-width="1.6" stroke-dashoffset="1.5" stroke-dasharray="18 6.7 1.4 6.8"/>
<line x1="316.5" y1="323" x2="316.5" y2="564" stroke="#f01818" stroke-width="1.6" stroke-dashoffset="4.3" stroke-dasharray="18 6.7 1.4 6.8"/>
<line x1="916.5" y1="323" x2="916.5" y2="564" stroke="#f01818" stroke-width="1.6" stroke-dashoffset="4.3" stroke-dasharray="18 6.7 1.4 6.8"/>
<g stroke="#9c5454" stroke-opacity="0.8" stroke-width="2.6" fill="none" stroke-linecap="butt">
<line x1="216.5" y1="343.5" x2="1016.5" y2="343.5"/>
<line x1="216.5" y1="343.5" x2="216.5" y2="543.5"/>
<line x1="216.5" y1="543.5" x2="1016.5" y2="543.5"/>
<line x1="1016.5" y1="343.5" x2="1016.5" y2="543.5"/>
<line x1="216.5" y1="343.5" x2="986.5" y2="383.5"/>
<line x1="986.5" y1="383.5" x2="1016.5" y2="543.5"/>
</g>
<rect x="95" y="155" width="1043" height="577" fill="url(#dots)"/>
<circle cx="316.5" cy="443.5" r="40" fill="none" stroke="#fff" stroke-width="2.6"/>
<circle cx="916.5" cy="443.5" r="40" fill="none" stroke="#fff" stroke-width="2.6"/>
<text x="0" y="0" transform="translate(426,535) rotate(-90)" font-family="Liberation Sans, sans-serif" font-size="29" fill="#fff" textLength="181.5" lengthAdjust="spacingAndGlyphs">104.245.02.4B</text>
<rect x="403" y="520" width="27" height="14.5" fill="#000"/>
<rect x="416" y="520" width="1" height="14.5" fill="#1d1d1d"/>
<rect x="406" y="523" width="1" height="1" fill="#3e3e3e"/>
<rect x="416" y="523" width="1" height="1" fill="#3e3e3e"/>
<rect x="426" y="523" width="1" height="1" fill="#3e3e3e"/>
<rect x="406" y="533" width="1" height="1" fill="#3e3e3e"/>
<rect x="416" y="533" width="1" height="1" fill="#3e3e3e"/>
<rect x="426" y="533" width="1" height="1" fill="#3e3e3e"/>
<rect x="406" y="525" width="20.5" height="2.8" fill="#fff"/>
<path d="M406,525.3 L412,532.4 L415.3,532.4 L409.6,525.3 Z" fill="#fff"/>
<rect x="95" y="543" width="41.5" height="1.2" fill="#b00000"/><rect x="116" y="523" width="1.2" height="41" fill="#b00000"/>
<rect x="211.5" y="338.5" width="10" height="10" fill="#c0001c" stroke="#c9a0a8" stroke-width="1"/>
<rect x="1011.5" y="538.5" width="10" height="10" fill="#c0001c" stroke="#c9a0a8" stroke-width="1"/>
<rect x="211.5" y="538.5" width="10" height="10" fill="#0000b0" stroke="#c9a0a8" stroke-width="1"/>
<rect x="1011.5" y="338.5" width="10" height="10" fill="#0000a8" stroke="#9a9ad8" stroke-width="1"/>
<circle cx="1016.5" cy="343.5" r="4.4" fill="none" stroke="#d01010" stroke-width="0.7"/>
<line x1="1012" y1="343.5" x2="1021" y2="343.5" stroke="#d01010" stroke-width="1"/>
<line x1="1016.5" y1="339" x2="1016.5" y2="348" stroke="#d01010" stroke-width="1"/>
<circle cx="989" cy="380" r="38.8" fill="none" stroke="#8ea4b8" stroke-width="1.3" stroke-opacity="0.3"/>
<circle cx="989" cy="380" r="37.6" fill="none" stroke="#8ea4b8" stroke-width="1.3" stroke-opacity="0.7"/>
<circle cx="989" cy="380" r="36.3" fill="none" stroke="#8ea4b8" stroke-width="1.3" stroke-opacity="0.55"/>
<circle cx="989" cy="380" r="35" fill="none" stroke="#8ea4b8" stroke-width="1.3" stroke-opacity="0.75"/>
<circle cx="989" cy="380" r="33.7" fill="none" stroke="#8ea4b8" stroke-width="1.3" stroke-opacity="0.55"/>
<circle cx="989" cy="380" r="32.4" fill="none" stroke="#8ea4b8" stroke-width="1.3" stroke-opacity="0.65"/>
<circle cx="989" cy="380" r="31.2" fill="none" stroke="#8ea4b8" stroke-width="1.3" stroke-opacity="0.35"/>
<circle cx="986.5" cy="383.5" r="5" fill="none" stroke="#c9940e" stroke-width="1"/>
<rect x="973.5" y="378.5" width="31" height="3.5" fill="#c4c4c4"/>
<rect x="987.5" y="364.5" width="3.5" height="31" fill="#c4c4c4"/>
<circle cx="989" cy="380" r="2.2" fill="#000" stroke="#ddd" stroke-width="0.8"/>
<text x="994.5" y="401.7" font-family="Liberation Sans, sans-serif" font-size="14.2" fill="#f4c420" textLength="37.5" lengthAdjust="spacingAndGlyphs">Rejilla</text>
</g>
<g clip-path="url(#hr)">
<rect x="86" y="152" width="1" height="3" fill="#4a4a4a"/>
<rect x="96" y="148" width="1" height="7" fill="#4a4a4a"/>
<text x="96.5" y="142" text-anchor="middle" font-family="Liberation Sans, sans-serif" font-size="10" fill="#1e1e1e">-2</text>
<rect x="106" y="152" width="1" height="3" fill="#4a4a4a"/>
<rect x="116" y="148" width="1" height="7" fill="#4a4a4a"/>
<text x="116.5" y="142" text-anchor="middle" font-family="Liberation Sans, sans-serif" font-size="10" fill="#1e1e1e">0</text>
<rect x="126" y="152" width="1" height="3" fill="#4a4a4a"/>
<rect x="136" y="148" width="1" height="7" fill="#4a4a4a"/>
<text x="136.5" y="142" text-anchor="middle" font-family="Liberation Sans, sans-serif" font-size="10" fill="#1e1e1e">2</text>
<rect x="146" y="152" width="1" height="3" fill="#4a4a4a"/>
<rect x="156" y="148" width="1" height="7" fill="#4a4a4a"/>
<text x="156.5" y="142" text-anchor="middle" font-family="Liberation Sans, sans-serif" font-size="10" fill="#1e1e1e">4</text>
<rect x="166" y="152" width="1" height="3" fill="#4a4a4a"/>
<rect x="176" y="148" width="1" height="7" fill="#4a4a4a"/>
<text x="176.5" y="142" text-anchor="middle" font-family="Liberation Sans, sans-serif" font-size="10" fill="#1e1e1e">6</text>
<rect x="186" y="152" width="1" height="3" fill="#4a4a4a"/>
<rect x="196" y="148" width="1" height="7" fill="#4a4a4a"/>
<text x="196.5" y="142" text-anchor="middle" font-family="Liberation Sans, sans-serif" font-size="10" fill="#1e1e1e">8</text>
<rect x="206" y="152" width="1" height="3" fill="#4a4a4a"/>
<rect x="216" y="148" width="1" height="7" fill="#4a4a4a"/>
<text x="216.5" y="142" text-anchor="middle" font-family="Liberation Sans, sans-serif" font-size="10" fill="#1e1e1e">10</text>
<rect x="226" y="152" width="1" height="3" fill="#4a4a4a"/>
<rect x="236" y="148" width="1" height="7" fill="#4a4a4a"/>
<text x="236.5" y="142" text-anchor="middle" font-family="Liberation Sans, sans-serif" font-size="10" fill="#1e1e1e">12</text>
<rect x="246" y="152" width="1" height="3" fill="#4a4a4a"/>
<rect x="256" y="148" width="1" height="7" fill="#4a4a4a"/>
<text x="256.5" y="142" text-anchor="middle" font-family="Liberation Sans, sans-serif" font-size="10" fill="#1e1e1e">14</text>
<rect x="266" y="152" width="1" height="3" fill="#4a4a4a"/>
<rect x="276" y="148" width="1" height="7" fill="#4a4a4a"/>
<text x="276.5" y="142" text-anchor="middle" font-family="Liberation Sans, sans-serif" font-size="10" fill="#1e1e1e">16</text>
<rect x="286" y="152" width="1" height="3" fill="#4a4a4a"/>
<rect x="296" y="148" width="1" height="7" fill="#4a4a4a"/>
<text x="296.5" y="142" text-anchor="middle" font-family="Liberation Sans, sans-serif" font-size="10" fill="#1e1e1e">18</text>
<rect x="306" y="152" width="1" height="3" fill="#4a4a4a"/>
<rect x="316" y="148" width="1" height="7" fill="#4a4a4a"/>
<text x="316.5" y="142" text-anchor="middle" font-family="Liberation Sans, sans-serif" font-size="10" fill="#1e1e1e">20</text>
<rect x="326" y="152" width="1" height="3" fill="#4a4a4a"/>
<rect x="336" y="148" width="1" height="7" fill="#4a4a4a"/>
<text x="336.5" y="142" text-anchor="middle" font-family="Liberation Sans, sans-serif" font-size="10" fill="#1e1e1e">22</text>
<rect x="346" y="152" width="1" height="3" fill="#4a4a4a"/>
<rect x="356" y="148" width="1" height="7" fill="#4a4a4a"/>
<text x="356.5" y="142" text-anchor="middle" font-family="Liberation Sans, sans-serif" font-size="10" fill="#1e1e1e">24</text>
<rect x="366" y="152" width="1" height="3" fill="#4a4a4a"/>
<rect x="376" y="148" width="1" height="7" fill="#4a4a4a"/>
<text x="376.5" y="142" text-anchor="middle" font-family="Liberation Sans, sans-serif" font-size="10" fill="#1e1e1e">26</text>
<rect x="386" y="152" width="1" height="3" fill="#4a4a4a"/>
<rect x="396" y="148" width="1" height="7" fill="#4a4a4a"/>
<text x="396.5" y="142" text-anchor="middle" font-family="Liberation Sans, sans-serif" font-size="10" fill="#1e1e1e">28</text>
<rect x="406" y="152" width="1" height="3" fill="#4a4a4a"/>
<rect x="416" y="148" width="1" height="7" fill="#4a4a4a"/>
<text x="416.5" y="142" text-anchor="middle" font-family="Liberation Sans, sans-serif" font-size="10" fill="#1e1e1e">30</text>
<rect x="426" y="152" width="1" height="3" fill="#4a4a4a"/>
<rect x="436" y="148" width="1" height="7" fill="#4a4a4a"/>
<text x="436.5" y="142" text-anchor="middle" font-family="Liberation Sans, sans-serif" font-size="10" fill="#1e1e1e">32</text>
<rect x="446" y="152" width="1" height="3" fill="#4a4a4a"/>
<rect x="456" y="148" width="1" height="7" fill="#4a4a4a"/>
<text x="456.5" y="142" text-anchor="middle" font-family="Liberation Sans, sans-serif" font-size="10" fill="#1e1e1e">34</text>
<rect x="466" y="152" width="1" height="3" fill="#4a4a4a"/>
<rect x="476" y="148" width="1" height="7" fill="#4a4a4a"/>
<text x="476.5" y="142" text-anchor="middle" font-family="Liberation Sans, sans-serif" font-size="10" fill="#1e1e1e">36</text>
<rect x="486" y="152" width="1" height="3" fill="#4a4a4a"/>
<rect x="496" y="148" width="1" height="7" fill="#4a4a4a"/>
<text x="496.5" y="142" text-anchor="middle" font-family="Liberation Sans, sans-serif" font-size="10" fill="#1e1e1e">38</text>
<rect x="506" y="152" width="1" height="3" fill="#4a4a4a"/>
<rect x="516" y="148" width="1" height="7" fill="#4a4a4a"/>
<text x="516.5" y="142" text-anchor="middle" font-family="Liberation Sans, sans-serif" font-size="10" fill="#1e1e1e">40</text>
<rect x="526" y="152" width="1" height="3" fill="#4a4a4a"/>
<rect x="536" y="148" width="1" height="7" fill="#4a4a4a"/>
<text x="536.5" y="142" text-anchor="middle" font-family="Liberation Sans, sans-serif" font-size="10" fill="#1e1e1e">42</text>
<rect x="546" y="152" width="1" height="3" fill="#4a4a4a"/>
<rect x="556" y="148" width="1" height="7" fill="#4a4a4a"/>
<text x="556.5" y="142" text-anchor="middle" font-family="Liberation Sans, sans-serif" font-size="10" fill="#1e1e1e">44</text>
<rect x="566" y="152" width="1" height="3" fill="#4a4a4a"/>
<rect x="576" y="148" width="1" height="7" fill="#4a4a4a"/>
<text x="576.5" y="142" text-anchor="middle" font-family="Liberation Sans, sans-serif" font-size="10" fill="#1e1e1e">46</text>
<rect x="586" y="152" width="1" height="3" fill="#4a4a4a"/>
<rect x="596" y="148" width="1" height="7" fill="#4a4a4a"/>
<text x="596.5" y="142" text-anchor="middle" font-family="Liberation Sans, sans-serif" font-size="10" fill="#1e1e1e">48</text>
<rect x="606" y="152" width="1" height="3" fill="#4a4a4a"/>
<rect x="616" y="148" width="1" height="7" fill="#4a4a4a"/>
<text x="616.5" y="142" text-anchor="middle" font-family="Liberation Sans, sans-serif" font-size="10" fill="#1e1e1e">50</text>
<rect x="626" y="152" width="1" height="3" fill="#4a4a4a"/>
<rect x="636" y="148" width="1" height="7" fill="#4a4a4a"/>
<text x="636.5" y="142" text-anchor="middle" font-family="Liberation Sans, sans-serif" font-size="10" fill="#1e1e1e">52</text>
<rect x="646" y="152" width="1" height="3" fill="#4a4a4a"/>
<rect x="656" y="148" width="1" height="7" fill="#4a4a4a"/>
<text x="656.5" y="142" text-anchor="middle" font-family="Liberation Sans, sans-serif" font-size="10" fill="#1e1e1e">54</text>
<rect x="666" y="152" width="1" height="3" fill="#4a4a4a"/>
<rect x="676" y="148" width="1" height="7" fill="#4a4a4a"/>
<text x="676.5" y="142" text-anchor="middle" font-family="Liberation Sans, sans-serif" font-size="10" fill="#1e1e1e">56</text>
<rect x="686" y="152" width="1" height="3" fill="#4a4a4a"/>
<rect x="696" y="148" width="1" height="7" fill="#4a4a4a"/>
<text x="696.5" y="142" text-anchor="middle" font-family="Liberation Sans, sans-serif" font-size="10" fill="#1e1e1e">58</text>
<rect x="706" y="152" width="1" height="3" fill="#4a4a4a"/>
<rect x="716" y="148" width="1" height="7" fill="#4a4a4a"/>
<text x="716.5" y="142" text-anchor="middle" font-family="Liberation Sans, sans-serif" font-size="10" fill="#1e1e1e">60</text>
<rect x="726" y="152" width="1" height="3" fill="#4a4a4a"/>
<rect x="736" y="148" width="1" height="7" fill="#4a4a4a"/>
<text x="736.5" y="142" text-anchor="middle" font-family="Liberation Sans, sans-serif" font-size="10" fill="#1e1e1e">62</text>
<rect x="746" y="152" width="1" height="3" fill="#4a4a4a"/>
<rect x="756" y="148" width="1" height="7" fill="#4a4a4a"/>
<text x="756.5" y="142" text-anchor="middle" font-family="Liberation Sans, sans-serif" font-size="10" fill="#1e1e1e">64</text>
<rect x="766" y="152" width="1" height="3" fill="#4a4a4a"/>
<rect x="776" y="148" width="1" height="7" fill="#4a4a4a"/>
<text x="776.5" y="142" text-anchor="middle" font-family="Liberation Sans, sans-serif" font-size="10" fill="#1e1e1e">66</text>
<rect x="786" y="152" width="1" height="3" fill="#4a4a4a"/>
<rect x="796" y="148" width="1" height="7" fill="#4a4a4a"/>
<text x="796.5" y="142" text-anchor="middle" font-family="Liberation Sans, sans-serif" font-size="10" fill="#1e1e1e">68</text>
<rect x="806" y="152" width="1" height="3" fill="#4a4a4a"/>
<rect x="816" y="148" width="1" height="7" fill="#4a4a4a"/>
<text x="816.5" y="142" text-anchor="middle" font-family="Liberation Sans, sans-serif" font-size="10" fill="#1e1e1e">70</text>
<rect x="826" y="152" width="1" height="3" fill="#4a4a4a"/>
<rect x="836" y="148" width="1" height="7" fill="#4a4a4a"/>
<text x="836.5" y="142" text-anchor="middle" font-family="Liberation Sans, sans-serif" font-size="10" fill="#1e1e1e">72</text>
<rect x="846" y="152" width="1" height="3" fill="#4a4a4a"/>
<rect x="856" y="148" width="1" height="7" fill="#4a4a4a"/>
<text x="856.5" y="142" text-anchor="middle" font-family="Liberation Sans, sans-serif" font-size="10" fill="#1e1e1e">74</text>
<rect x="866" y="152" width="1" height="3" fill="#4a4a4a"/>
<rect x="876" y="148" width="1" height="7" fill="#4a4a4a"/>
<text x="876.5" y="142" text-anchor="middle" font-family="Liberation Sans, sans-serif" font-size="10" fill="#1e1e1e">76</text>
<rect x="886" y="152" width="1" height="3" fill="#4a4a4a"/>
<rect x="896" y="148" width="1" height="7" fill="#4a4a4a"/>
<text x="896.5" y="142" text-anchor="middle" font-family="Liberation Sans, sans-serif" font-size="10" fill="#1e1e1e">78</text>
<rect x="906" y="152" width="1" height="3" fill="#4a4a4a"/>
<rect x="916" y="148" width="1" height="7" fill="#4a4a4a"/>
<text x="916.5" y="142" text-anchor="middle" font-family="Liberation Sans, sans-serif" font-size="10" fill="#1e1e1e">80</text>
<rect x="926" y="152" width="1" height="3" fill="#4a4a4a"/>
<rect x="936" y="148" width="1" height="7" fill="#4a4a4a"/>
<text x="936.5" y="142" text-anchor="middle" font-family="Liberation Sans, sans-serif" font-size="10" fill="#1e1e1e">82</text>
<rect x="946" y="152" width="1" height="3" fill="#4a4a4a"/>
<rect x="956" y="148" width="1" height="7" fill="#4a4a4a"/>
<text x="956.5" y="142" text-anchor="middle" font-family="Liberation Sans, sans-serif" font-size="10" fill="#1e1e1e">84</text>
<rect x="966" y="152" width="1" height="3" fill="#4a4a4a"/>
<rect x="976" y="148" width="1" height="7" fill="#4a4a4a"/>
<text x="976.5" y="142" text-anchor="middle" font-family="Liberation Sans, sans-serif" font-size="10" fill="#1e1e1e">86</text>
<rect x="986" y="152" width="1" height="3" fill="#4a4a4a"/>
<rect x="996" y="148" width="1" height="7" fill="#4a4a4a"/>
<text x="996.5" y="142" text-anchor="middle" font-family="Liberation Sans, sans-serif" font-size="10" fill="#1e1e1e">88</text>
<rect x="1006" y="152" width="1" height="3" fill="#4a4a4a"/>
<rect x="1016" y="148" width="1" height="7" fill="#4a4a4a"/>
<text x="1016.5" y="142" text-anchor="middle" font-family="Liberation Sans, sans-serif" font-size="10" fill="#1e1e1e">90</text>
<rect x="1026" y="152" width="1" height="3" fill="#4a4a4a"/>
<rect x="1036" y="148" width="1" height="7" fill="#4a4a4a"/>
<text x="1036.5" y="142" text-anchor="middle" font-family="Liberation Sans, sans-serif" font-size="10" fill="#1e1e1e">92</text>
<rect x="1046" y="152" width="1" height="3" fill="#4a4a4a"/>
<rect x="1056" y="148" width="1" height="7" fill="#4a4a4a"/>
<text x="1056.5" y="142" text-anchor="middle" font-family="Liberation Sans, sans-serif" font-size="10" fill="#1e1e1e">94</text>
<rect x="1066" y="152" width="1" height="3" fill="#4a4a4a"/>
<rect x="1076" y="148" width="1" height="7" fill="#4a4a4a"/>
<text x="1076.5" y="142" text-anchor="middle" font-family="Liberation Sans, sans-serif" font-size="10" fill="#1e1e1e">96</text>
<rect x="1086" y="152" width="1" height="3" fill="#4a4a4a"/>
<rect x="1096" y="148" width="1" height="7" fill="#4a4a4a"/>
<text x="1096.5" y="142" text-anchor="middle" font-family="Liberation Sans, sans-serif" font-size="10" fill="#1e1e1e">98</text>
<rect x="1106" y="152" width="1" height="3" fill="#4a4a4a"/>
<rect x="1116" y="148" width="1" height="7" fill="#4a4a4a"/>
<text x="1116.5" y="142" text-anchor="middle" font-family="Liberation Sans, sans-serif" font-size="10" fill="#1e1e1e">100</text>
<rect x="1126" y="152" width="1" height="3" fill="#4a4a4a"/>
<rect x="1136" y="148" width="1" height="7" fill="#4a4a4a"/>
<text x="1136.5" y="142" text-anchor="middle" font-family="Liberation Sans, sans-serif" font-size="10" fill="#1e1e1e">102</text>
<rect x="1146" y="152" width="1" height="3" fill="#4a4a4a"/>
<path d="M981,145 L992,145 L986.5,151 Z" fill="#000"/>
</g>
<g clip-path="url(#vr)">
<rect x="88" y="743" width="7" height="1" fill="#4a4a4a"/>
<text transform="translate(82,743.5) rotate(-90)" x="0" y="0" text-anchor="middle" font-family="Liberation Sans, sans-serif" font-size="10" fill="#1e1e1e">-20</text>
<rect x="92" y="733" width="3" height="1" fill="#4a4a4a"/>
<rect x="88" y="723" width="7" height="1" fill="#4a4a4a"/>
<text transform="translate(82,723.5) rotate(-90)" x="0" y="0" text-anchor="middle" font-family="Liberation Sans, sans-serif" font-size="10" fill="#1e1e1e">-18</text>
<rect x="92" y="713" width="3" height="1" fill="#4a4a4a"/>
<rect x="88" y="703" width="7" height="1" fill="#4a4a4a"/>
<text transform="translate(82,703.5) rotate(-90)" x="0" y="0" text-anchor="middle" font-family="Liberation Sans, sans-serif" font-size="10" fill="#1e1e1e">-16</text>
<rect x="92" y="693" width="3" height="1" fill="#4a4a4a"/>
<rect x="88" y="683" width="7" height="1" fill="#4a4a4a"/>
<text transform="translate(82,683.5) rotate(-90)" x="0" y="0" text-anchor="middle" font-family="Liberation Sans, sans-serif" font-size="10" fill="#1e1e1e">-14</text>
<rect x="92" y="673" width="3" height="1" fill="#4a4a4a"/>
<rect x="88" y="663" width="7" height="1" fill="#4a4a4a"/>
<text transform="translate(82,663.5) rotate(-90)" x="0" y="0" text-anchor="middle" font-family="Liberation Sans, sans-serif" font-size="10" fill="#1e1e1e">-12</text>
<rect x="92" y="653" width="3" height="1" fill="#4a4a4a"/>
<rect x="88" y="643" width="7" height="1" fill="#4a4a4a"/>
<text transform="translate(82,643.5) rotate(-90)" x="0" y="0" text-anchor="middle" font-family="Liberation Sans, sans-serif" font-size="10" fill="#1e1e1e">-10</text>
<rect x="92" y="633" width="3" height="1" fill="#4a4a4a"/>
<rect x="88" y="623" width="7" height="1" fill="#4a4a4a"/>
<text transform="translate(82,623.5) rotate(-90)" x="0" y="0" text-anchor="middle" font-family="Liberation Sans, sans-serif" font-size="10" fill="#1e1e1e">-8</text>
<rect x="92" y="613" width="3" height="1" fill="#4a4a4a"/>
<rect x="88" y="603" width="7" height="1" fill="#4a4a4a"/>
<text transform="translate(82,603.5) rotate(-90)" x="0" y="0" text-anchor="middle" font-family="Liberation Sans, sans-serif" font-size="10" fill="#1e1e1e">-6</text>
<rect x="92" y="593" width="3" height="1" fill="#4a4a4a"/>
<rect x="88" y="583" width="7" height="1" fill="#4a4a4a"/>
<text transform="translate(82,583.5) rotate(-90)" x="0" y="0" text-anchor="middle" font-family="Liberation Sans, sans-serif" font-size="10" fill="#1e1e1e">-4</text>
<rect x="92" y="573" width="3" height="1" fill="#4a4a4a"/>
<rect x="88" y="563" width="7" height="1" fill="#4a4a4a"/>
<text transform="translate(82,563.5) rotate(-90)" x="0" y="0" text-anchor="middle" font-family="Liberation Sans, sans-serif" font-size="10" fill="#1e1e1e">-2</text>
<rect x="92" y="553" width="3" height="1" fill="#4a4a4a"/>
<rect x="88" y="543" width="7" height="1" fill="#4a4a4a"/>
<text transform="translate(82,543.5) rotate(-90)" x="0" y="0" text-anchor="middle" font-family="Liberation Sans, sans-serif" font-size="10" fill="#1e1e1e">0</text>
<rect x="92" y="533" width="3" height="1" fill="#4a4a4a"/>
<rect x="88" y="523" width="7" height="1" fill="#4a4a4a"/>
<text transform="translate(82,523.5) rotate(-90)" x="0" y="0" text-anchor="middle" font-family="Liberation Sans, sans-serif" font-size="10" fill="#1e1e1e">2</text>
<rect x="92" y="513" width="3" height="1" fill="#4a4a4a"/>
<rect x="88" y="503" width="7" height="1" fill="#4a4a4a"/>
<text transform="translate(82,503.5) rotate(-90)" x="0" y="0" text-anchor="middle" font-family="Liberation Sans, sans-serif" font-size="10" fill="#1e1e1e">4</text>
<rect x="92" y="493" width="3" height="1" fill="#4a4a4a"/>
<rect x="88" y="483" width="7" height="1" fill="#4a4a4a"/>
<text transform="translate(82,483.5) rotate(-90)" x="0" y="0" text-anchor="middle" font-family="Liberation Sans, sans-serif" font-size="10" fill="#1e1e1e">6</text>
<rect x="92" y="473" width="3" height="1" fill="#4a4a4a"/>
<rect x="88" y="463" width="7" height="1" fill="#4a4a4a"/>
<text transform="translate(82,463.5) rotate(-90)" x="0" y="0" text-anchor="middle" font-family="Liberation Sans, sans-serif" font-size="10" fill="#1e1e1e">8</text>
<rect x="92" y="453" width="3" height="1" fill="#4a4a4a"/>
<rect x="88" y="443" width="7" height="1" fill="#4a4a4a"/>
<text transform="translate(82,443.5) rotate(-90)" x="0" y="0" text-anchor="middle" font-family="Liberation Sans, sans-serif" font-size="10" fill="#1e1e1e">10</text>
<rect x="92" y="433" width="3" height="1" fill="#4a4a4a"/>
<rect x="88" y="423" width="7" height="1" fill="#4a4a4a"/>
<text transform="translate(82,423.5) rotate(-90)" x="0" y="0" text-anchor="middle" font-family="Liberation Sans, sans-serif" font-size="10" fill="#1e1e1e">12</text>
<rect x="92" y="413" width="3" height="1" fill="#4a4a4a"/>
<rect x="88" y="403" width="7" height="1" fill="#4a4a4a"/>
<text transform="translate(82,403.5) rotate(-90)" x="0" y="0" text-anchor="middle" font-family="Liberation Sans, sans-serif" font-size="10" fill="#1e1e1e">14</text>
<rect x="92" y="393" width="3" height="1" fill="#4a4a4a"/>
<rect x="88" y="383" width="7" height="1" fill="#4a4a4a"/>
<text transform="translate(82,383.5) rotate(-90)" x="0" y="0" text-anchor="middle" font-family="Liberation Sans, sans-serif" font-size="10" fill="#1e1e1e">16</text>
<rect x="92" y="373" width="3" height="1" fill="#4a4a4a"/>
<rect x="88" y="363" width="7" height="1" fill="#4a4a4a"/>
<text transform="translate(82,363.5) rotate(-90)" x="0" y="0" text-anchor="middle" font-family="Liberation Sans, sans-serif" font-size="10" fill="#1e1e1e">18</text>
<rect x="92" y="353" width="3" height="1" fill="#4a4a4a"/>
<rect x="88" y="343" width="7" height="1" fill="#4a4a4a"/>
<text transform="translate(82,343.5) rotate(-90)" x="0" y="0" text-anchor="middle" font-family="Liberation Sans, sans-serif" font-size="10" fill="#1e1e1e">20</text>
<rect x="92" y="333" width="3" height="1" fill="#4a4a4a"/>
<rect x="88" y="323" width="7" height="1" fill="#4a4a4a"/>
<text transform="translate(82,323.5) rotate(-90)" x="0" y="0" text-anchor="middle" font-family="Liberation Sans, sans-serif" font-size="10" fill="#1e1e1e">22</text>
<rect x="92" y="313" width="3" height="1" fill="#4a4a4a"/>
<rect x="88" y="303" width="7" height="1" fill="#4a4a4a"/>
<text transform="translate(82,303.5) rotate(-90)" x="0" y="0" text-anchor="middle" font-family="Liberation Sans, sans-serif" font-size="10" fill="#1e1e1e">24</text>
<rect x="92" y="293" width="3" height="1" fill="#4a4a4a"/>
<rect x="88" y="283" width="7" height="1" fill="#4a4a4a"/>
<text transform="translate(82,283.5) rotate(-90)" x="0" y="0" text-anchor="middle" font-family="Liberation Sans, sans-serif" font-size="10" fill="#1e1e1e">26</text>
<rect x="92" y="273" width="3" height="1" fill="#4a4a4a"/>
<rect x="88" y="263" width="7" height="1" fill="#4a4a4a"/>
<text transform="translate(82,263.5) rotate(-90)" x="0" y="0" text-anchor="middle" font-family="Liberation Sans, sans-serif" font-size="10" fill="#1e1e1e">28</text>
<rect x="92" y="253" width="3" height="1" fill="#4a4a4a"/>
<rect x="88" y="243" width="7" height="1" fill="#4a4a4a"/>
<text transform="translate(82,243.5) rotate(-90)" x="0" y="0" text-anchor="middle" font-family="Liberation Sans, sans-serif" font-size="10" fill="#1e1e1e">30</text>
<rect x="92" y="233" width="3" height="1" fill="#4a4a4a"/>
<rect x="88" y="223" width="7" height="1" fill="#4a4a4a"/>
<text transform="translate(82,223.5) rotate(-90)" x="0" y="0" text-anchor="middle" font-family="Liberation Sans, sans-serif" font-size="10" fill="#1e1e1e">32</text>
<rect x="92" y="213" width="3" height="1" fill="#4a4a4a"/>
<rect x="88" y="203" width="7" height="1" fill="#4a4a4a"/>
<text transform="translate(82,203.5) rotate(-90)" x="0" y="0" text-anchor="middle" font-family="Liberation Sans, sans-serif" font-size="10" fill="#1e1e1e">34</text>
<rect x="92" y="193" width="3" height="1" fill="#4a4a4a"/>
<rect x="88" y="183" width="7" height="1" fill="#4a4a4a"/>
<text transform="translate(82,183.5) rotate(-90)" x="0" y="0" text-anchor="middle" font-family="Liberation Sans, sans-serif" font-size="10" fill="#1e1e1e">36</text>
<rect x="92" y="173" width="3" height="1" fill="#4a4a4a"/>
<rect x="88" y="163" width="7" height="1" fill="#4a4a4a"/>
<text transform="translate(82,163.5) rotate(-90)" x="0" y="0" text-anchor="middle" font-family="Liberation Sans, sans-serif" font-size="10" fill="#1e1e1e">38</text>
<rect x="92" y="153" width="3" height="1" fill="#4a4a4a"/>
<rect x="88" y="143" width="7" height="1" fill="#4a4a4a"/>
<text transform="translate(82,143.5) rotate(-90)" x="0" y="0" text-anchor="middle" font-family="Liberation Sans, sans-serif" font-size="10" fill="#1e1e1e">40</text>
<path d="M85,377 L85,389 L91,383.5 Z" fill="#000"/>
</g>
</svg>
<svg class="abs" style="left:0;top:0" width="1500" height="844">
<defs><linearGradient id="dtitle" x1="0" y1="0" x2="0" y2="1"><stop offset="0" stop-color="#eeeeee"/><stop offset="1" stop-color="#dadada"/></linearGradient><linearGradient id="dbtn" x1="0" y1="0" x2="0" y2="1"><stop offset="0" stop-color="#fafafa"/><stop offset="0.2" stop-color="#e8e8e8"/><stop offset="1" stop-color="#f4f4f4"/></linearGradient><linearGradient id="rtbg" x1="0" y1="0" x2="1" y2="0"><stop offset="0" stop-color="#eaeaea"/><stop offset="0.45" stop-color="#e0e0e0"/><stop offset="0.93" stop-color="#c8c8c8"/><stop offset="0.96" stop-color="#b4b4b4"/><stop offset="1" stop-color="#c0c0c0"/></linearGradient></defs>
<rect x="1155" y="108" width="300" height="690" fill="#fff"/>
<rect x="1155" y="108" width="300" height="22" fill="url(#dtitle)"/>
<rect x="1155" y="129.5" width="300" height="1" fill="#d0d0d0"/>
<circle cx="1164" cy="118" r="7" fill="#6a6a6a"/>
<path d="M1160.8,114.8 L1167.2,121.2 M1167.2,114.8 L1160.8,121.2" stroke="#eee" stroke-width="1.8"/>
<circle cx="1182" cy="118" r="7" fill="#6a6a6a"/>
<rect x="1178.5" y="117" width="5" height="4" fill="none" stroke="#eee" stroke-width="1"/><path d="M1180.5,116.5 V114.8 H1185.5 V118.8 H1184" fill="none" stroke="#eee" stroke-width="1"/>
<text x="1322" y="123" text-anchor="middle" font-family="Liberation Sans, sans-serif" font-size="12" fill="#404040">Lista de capas</text>
<rect x="1156.5" y="131" width="59" height="25" fill="url(#dbtn)" stroke="#a8a8a8" stroke-width="1"/>
<rect x="1216.5" y="131" width="59" height="25" fill="url(#dbtn)" stroke="#a8a8a8" stroke-width="1"/>
<rect x="1276.5" y="131" width="59" height="25" fill="url(#dbtn)" stroke="#a8a8a8" stroke-width="1"/>
<rect x="1336.5" y="131" width="59" height="25" fill="url(#dbtn)" stroke="#a8a8a8" stroke-width="1"/>
<rect x="1396.5" y="131" width="58" height="25" fill="url(#dbtn)" stroke="#a8a8a8" stroke-width="1"/>
<rect x="1155" y="155" width="300" height="2.2" fill="#b8b8b8"/>
<g transform="translate(1185,142.8) scale(0.95)"><path d="M-8.5,0.3 Q-4.5,-6 0,-6 Q4.5,-6 8.5,0.3 Q4.5,5.5 0,5.5 Q-4.5,5.5 -8.5,0.3 Z" fill="#000"/><path d="M-6.2,0.6 Q-3,-3.3 0,-3.3 Q3,-3.3 6.2,0.6 Q3,3.4 0,3.4 Q-3,3.4 -6.2,0.6 Z" fill="#fff"/><circle cx="0" cy="0.2" r="3.2" fill="#000"/><circle cx="-0.9" cy="-1" r="0.9" fill="#fff"/></g>
<g transform="translate(1245,142.8) scale(0.95)"><path d="M-8.5,0.3 Q-4.5,-6 0,-6 Q4.5,-6 8.5,0.3 Q4.5,5.5 0,5.5 Q-4.5,5.5 -8.5,0.3 Z" fill="#b0b0b0"/><path d="M-6.2,0.6 Q-3,-3.3 0,-3.3 Q3,-3.3 6.2,0.6 Q3,3.4 0,3.4 Q-3,3.4 -6.2,0.6 Z" fill="#fff"/><circle cx="0" cy="0.2" r="3.2" fill="#b0b0b0"/><circle cx="-0.9" cy="-1" r="0.9" fill="#fff"/></g>
<path d="M1298.5,143 H1310.5 M1304.5,137 V149" stroke="#e00000" stroke-width="3"/>
<path d="M1359,143 H1370" stroke="#e00000" stroke-width="3"/>
<g transform="translate(1425,143) rotate(-45) scale(1.05)"><path d="M-9,0 L-6,-1.9 L7,-1.9 L7,1.9 L-6,1.9 Z" fill="#e8b440" stroke="#8a5a10" stroke-width="0.6"/><path d="M-9,0 L-6,-1.9 L-6,1.9 Z" fill="#f4d8a8"/><rect x="6.5" y="-1.9" width="2.8" height="3.8" fill="#e02a2a"/></g>
<rect x="1161.5" y="163.5" width="15.5" height="8" fill="#fff" stroke="#000" stroke-width="1"/>
<text x="1183" y="172.0" font-family="Liberation Sans, sans-serif" font-size="13" fill="#111">0</text>
<g transform="translate(1422.8,167.4) scale(0.86)"><path d="M-8.5,0.3 Q-4.5,-6 0,-6 Q4.5,-6 8.5,0.3 Q4.5,5.5 0,5.5 Q-4.5,5.5 -8.5,0.3 Z" fill="#000"/><path d="M-6.2,0.6 Q-3,-3.3 0,-3.3 Q3,-3.3 6.2,0.6 Q3,3.4 0,3.4 Q-3,3.4 -6.2,0.6 Z" fill="#fff"/><circle cx="0" cy="0.2" r="3.2" fill="#000"/><circle cx="-0.9" cy="-1" r="0.9" fill="#fff"/></g>
<path d="M1441.4,167.4 V164.4 Q1441.4,160.6 1445,160.6 Q1448.6,160.6 1448.6,164.4 V167.4" fill="none" stroke="#b8b8b8" stroke-width="1.4"/><rect x="1440.1" y="167.20000000000002" width="9.8" height="7.6" fill="#bcbcbc"/>
<rect x="1161.5" y="183.5" width="15.5" height="8" fill="#f00" stroke="#000" stroke-width="1"/>
<text x="1183" y="192.0" font-family="Liberation Sans, sans-serif" font-size="13" fill="#111">Center</text>
<g transform="translate(1422.8,187.4) scale(0.86)"><path d="M-8.5,0.3 Q-4.5,-6 0,-6 Q4.5,-6 8.5,0.3 Q4.5,5.5 0,5.5 Q-4.5,5.5 -8.5,0.3 Z" fill="#000"/><path d="M-6.2,0.6 Q-3,-3.3 0,-3.3 Q3,-3.3 6.2,0.6 Q3,3.4 0,3.4 Q-3,3.4 -6.2,0.6 Z" fill="#fff"/><circle cx="0" cy="0.2" r="3.2" fill="#000"/><circle cx="-0.9" cy="-1" r="0.9" fill="#fff"/></g>
<path d="M1441.4,187.4 V184.4 Q1441.4,180.6 1445,180.6 Q1448.6,180.6 1448.6,184.4 V187.4" fill="none" stroke="#b8b8b8" stroke-width="1.4"/><rect x="1440.1" y="187.20000000000002" width="9.8" height="7.6" fill="#bcbcbc"/>
<rect x="1161.5" y="203.5" width="15.5" height="8" fill="#000" stroke="#000" stroke-width="1"/>
<text x="1183" y="212.0" font-family="Liberation Sans, sans-serif" font-size="13" fill="#111">Hidden</text>
<g transform="translate(1422.8,207.4) scale(0.86)"><path d="M-8.5,0.3 Q-4.5,-6 0,-6 Q4.5,-6 8.5,0.3 Q4.5,5.5 0,5.5 Q-4.5,5.5 -8.5,0.3 Z" fill="#000"/><path d="M-6.2,0.6 Q-3,-3.3 0,-3.3 Q3,-3.3 6.2,0.6 Q3,3.4 0,3.4 Q-3,3.4 -6.2,0.6 Z" fill="#fff"/><circle cx="0" cy="0.2" r="3.2" fill="#000"/><circle cx="-0.9" cy="-1" r="0.9" fill="#fff"/></g>
<path d="M1441.4,207.4 V204.4 Q1441.4,200.6 1445,200.6 Q1448.6,200.6 1448.6,204.4 V207.4" fill="none" stroke="#b8b8b8" stroke-width="1.4"/><rect x="1440.1" y="207.20000000000002" width="9.8" height="7.6" fill="#bcbcbc"/>
<rect x="1161.5" y="223.5" width="15.5" height="8" fill="#fff" stroke="#000" stroke-width="1"/>
<text x="1183" y="232.0" font-family="Liberation Sans, sans-serif" font-size="13" fill="#111">Visible</text>
<g transform="translate(1422.8,227.4) scale(0.86)"><path d="M-8.5,0.3 Q-4.5,-6 0,-6 Q4.5,-6 8.5,0.3 Q4.5,5.5 0,5.5 Q-4.5,5.5 -8.5,0.3 Z" fill="#000"/><path d="M-6.2,0.6 Q-3,-3.3 0,-3.3 Q3,-3.3 6.2,0.6 Q3,3.4 0,3.4 Q-3,3.4 -6.2,0.6 Z" fill="#fff"/><circle cx="0" cy="0.2" r="3.2" fill="#000"/><circle cx="-0.9" cy="-1" r="0.9" fill="#fff"/></g>
<path d="M1441.4,227.4 V224.4 Q1441.4,220.6 1445,220.6 Q1448.6,220.6 1448.6,224.4 V227.4" fill="none" stroke="#b8b8b8" stroke-width="1.4"/><rect x="1440.1" y="227.20000000000002" width="9.8" height="7.6" fill="#bcbcbc"/>
<g transform="translate(1400,227) rotate(-45) scale(1.0)"><path d="M-9,0 L-6,-1.9 L7,-1.9 L7,1.9 L-6,1.9 Z" fill="#e8b440" stroke="#8a5a10" stroke-width="0.6"/><path d="M-9,0 L-6,-1.9 L-6,1.9 Z" fill="#f4d8a8"/><rect x="6.5" y="-1.9" width="2.8" height="3.8" fill="#e02a2a"/></g>
<rect x="1454" y="108" width="46" height="690" fill="url(#rtbg)"/>
<rect x="1454" y="108" width="1" height="690" fill="#c4c4c4"/>
<rect x="1463.0" y="116.5" width="1.5" height="1.5" fill="#a0a0a0"/>
<rect x="1468.9" y="116.5" width="1.5" height="1.5" fill="#a0a0a0"/>
<rect x="1474.8" y="116.5" width="1.5" height="1.5" fill="#a0a0a0"/>
<rect x="1480.7" y="116.5" width="1.5" height="1.5" fill="#a0a0a0"/>
<rect x="1486.6" y="116.5" width="1.5" height="1.5" fill="#a0a0a0"/>
<rect x="1492.5" y="116.5" width="1.5" height="1.5" fill="#a0a0a0"/>
<rect x="1458.0" y="261" width="1.3" height="1.3" fill="#888"/>
<rect x="1458.0" y="409" width="1.3" height="1.3" fill="#888"/>
<rect x="1462.0" y="261" width="1.3" height="1.3" fill="#888"/>
<rect x="1462.0" y="409" width="1.3" height="1.3" fill="#888"/>
<rect x="1466.0" y="261" width="1.3" height="1.3" fill="#888"/>
<rect x="1466.0" y="409" width="1.3" height="1.3" fill="#888"/>
<rect x="1470.0" y="261" width="1.3" height="1.3" fill="#888"/>
<rect x="1470.0" y="409" width="1.3" height="1.3" fill="#888"/>
<rect x="1474.0" y="261" width="1.3" height="1.3" fill="#888"/>
<rect x="1474.0" y="409" width="1.3" height="1.3" fill="#888"/>
<rect x="1478.0" y="261" width="1.3" height="1.3" fill="#888"/>
<rect x="1478.0" y="409" width="1.3" height="1.3" fill="#888"/>
<rect x="1482.0" y="261" width="1.3" height="1.3" fill="#888"/>
<rect x="1482.0" y="409" width="1.3" height="1.3" fill="#888"/>
<rect x="1486.0" y="261" width="1.3" height="1.3" fill="#888"/>
<rect x="1486.0" y="409" width="1.3" height="1.3" fill="#888"/>
<rect x="1490.0" y="261" width="1.3" height="1.3" fill="#888"/>
<rect x="1490.0" y="409" width="1.3" height="1.3" fill="#888"/>
<rect x="1494.0" y="261" width="1.3" height="1.3" fill="#888"/>
<rect x="1494.0" y="409" width="1.3" height="1.3" fill="#888"/>
<rect x="1456" y="120" width="43" height="42.5" rx="5" fill="#b5b5b5"/>
<rect x="1456" y="417" width="43" height="43" rx="5" fill="#b5b5b5"/>
<rect x="1463.5" y="127.5" width="27.5" height="27" fill="#fff" stroke="#222" stroke-width="1"/><rect x="1463.5" y="127.5" width="27.5" height="4.5" fill="#000"/><rect x="1464.7" y="128.5" width="3" height="3" fill="#fff"/>
<rect x="1463.5" y="174.5" width="27.5" height="27" fill="#fff" stroke="#222" stroke-width="1"/><rect x="1463.5" y="174.5" width="27.5" height="4.5" fill="#000"/><rect x="1464.7" y="175.5" width="3" height="3" fill="#fff"/>
<rect x="1463.5" y="220.5" width="27.5" height="27" fill="#fff" stroke="#222" stroke-width="1"/><rect x="1463.5" y="220.5" width="27.5" height="4.5" fill="#000"/><rect x="1464.7" y="221.5" width="3" height="3" fill="#fff"/>
<rect x="1463.5" y="276.5" width="27.5" height="27" fill="#fff" stroke="#222" stroke-width="1"/><rect x="1463.5" y="276.5" width="27.5" height="4.5" fill="#000"/><rect x="1464.7" y="277.5" width="3" height="3" fill="#fff"/>
<rect x="1463.5" y="323.0" width="27.5" height="27" fill="#fff" stroke="#222" stroke-width="1"/><rect x="1463.5" y="323.0" width="27.5" height="4.5" fill="#000"/><rect x="1464.7" y="324.0" width="3" height="3" fill="#fff"/>
<rect x="1463.5" y="369.0" width="27.5" height="27" fill="#fff" stroke="#222" stroke-width="1"/><rect x="1463.5" y="369.0" width="27.5" height="4.5" fill="#000"/><rect x="1464.7" y="370.0" width="3" height="3" fill="#fff"/>
<rect x="1463.5" y="424.5" width="27.5" height="27" fill="#fff" stroke="#222" stroke-width="1"/><rect x="1463.5" y="424.5" width="27.5" height="4.5" fill="#000"/><rect x="1464.7" y="425.5" width="3" height="3" fill="#fff"/>
<rect x="1463.5" y="471.5" width="27.5" height="27" fill="#fff" stroke="#222" stroke-width="1"/><rect x="1463.5" y="471.5" width="27.5" height="4.5" fill="#000"/><rect x="1464.7" y="472.5" width="3" height="3" fill="#fff"/>
<path d="M1468,149 L1468,140 L1478,135 L1478,144 Z" fill="#d8d8d8" stroke="#555" stroke-width="0.7"/>
<path d="M1471,149 L1471,140 L1484,134 L1484,143 Z" fill="#eee" stroke="#555" stroke-width="0.7"/>
<path d="M1476,146 L1480,140 L1481,145 Z" fill="none" stroke="#e04040" stroke-width="0.8"/>
<rect x="1470" y="184.5" width="11" height="8" fill="#f4e8b8" stroke="#666" stroke-width="0.7"/>
<circle cx="1479.5" cy="191.5" r="4.8" fill="#f4e8b8" fill-opacity="0.75" stroke="#666" stroke-width="0.7"/>
<rect x="1468.5" y="230.3" width="17" height="12" rx="2" fill="#f4f4f4" stroke="#b0c4e4" stroke-width="0.8"/>
<rect x="1466" y="284.3" width="4.2" height="3.2" fill="#000"/><rect x="1473.8" y="284.40000000000003" width="13.5" height="3" fill="#fff" stroke="#333" stroke-width="0.7"/>
<rect x="1466" y="290.2" width="4.2" height="3.2" fill="#000"/><rect x="1473.8" y="290.3" width="13.5" height="3" fill="#fff" stroke="#333" stroke-width="0.7"/>
<rect x="1466" y="296.1" width="4.2" height="3.2" fill="#000"/><rect x="1473.8" y="296.20000000000005" width="13.5" height="3" fill="#fff" stroke="#333" stroke-width="0.7"/>
<path d="M1470,332 Q1477,329 1484,332 L1479,339 L1479,347 L1476.5,345.5 L1476.5,339 Z" fill="#bdbdbd" stroke="#777" stroke-width="0.7"/>
<path d="M1469,375 L1473,378 L1473,388 L1469,391 Z" fill="#eee" stroke="#444" stroke-width="0.8"/>
<rect x="1473" y="379" width="11" height="8" fill="#a8a8a8" stroke="#666" stroke-width="0.6"/>
<path d="M1466,383 H1487" stroke="#f08080" stroke-width="0.7" stroke-dasharray="2 1"/>
<rect x="1465.5" y="432.0" width="14" height="1.1" fill="#a8a8a8"/>
<rect x="1465.5" y="435.4" width="13" height="1.1" fill="#a8a8a8"/>
<rect x="1465.5" y="438.8" width="15" height="1.1" fill="#a8a8a8"/>
<rect x="1465.5" y="442.2" width="16" height="1.1" fill="#a8a8a8"/>
<rect x="1463.5" y="446.5" width="27.5" height="5" fill="#fff" stroke="#333" stroke-width="0.8"/>
<rect x="1465" y="448.5" width="2.5" height="1.2" fill="#888"/><rect x="1472.5" y="448.3" width="16" height="1.6" fill="#999"/>
<rect x="1470.5" y="481.5" width="13" height="15.5" rx="1" fill="#c7862a"/><rect x="1472" y="483" width="10" height="12.5" fill="#f4f4f4"/>
<path d="M1473.5,486 H1480.5 M1473.5,488.5 H1480.5 M1473.5,491 H1479" stroke="#cfcfcf" stroke-width="0.8"/>
<rect x="1474" y="479.8" width="6" height="3.5" rx="1" fill="#a8a89a" stroke="#777" stroke-width="0.5"/>
</svg>
<div class="abs" style="left:0;top:798px;width:1500px;height:46px;background:#dcdcdc"></div>
<div class="abs" style="left:0;top:797.5px;width:1500px;height:1px;background:#c4c4c4"></div>
<div class="abs" style="left:2px;top:808px;font-size:10px;line-height:12px;color:#111;white-space:nowrap;letter-spacing:0.12px">87,16</div>
<div class="abs" style="left:2px;top:828px;font-size:10px;line-height:12px;color:#111;white-space:nowrap;letter-spacing:0.12px">@-3,-4</div>
<div class="abs" style="left:254px;top:802px;width:1px;height:42px;background:#a8a8a8"></div>
<div class="abs" style="left:256px;top:808px;font-size:10px;line-height:12px;color:#111;white-space:nowrap;letter-spacing:0.12px">88.459&lt;10°</div>
<div class="abs" style="left:256px;top:828px;font-size:10px;line-height:12px;color:#111;white-space:nowrap;letter-spacing:0.12px">@5&lt;233°</div>
<div class="abs" style="left:506px;top:819px;width:6px;height:6px;border-radius:3px;background:#c8c8c8"></div>
<div class="abs" style="left:525px;top:816px;font-size:10px;line-height:12px;color:#111;white-space:nowrap;letter-spacing:0.12px">Punto objetivo del punto de referencia</div>
<svg class="abs" style="left:714px;top:805px" width="24" height="34"><path d="M3.5,10 Q3.5,1 12,1 Q20.5,1 20.5,10 L20.5,22 Q20.5,30.6 12,30.6 Q3.5,30.6 3.5,22 Z" fill="#fff" stroke="#555" stroke-width="1"/><path d="M3.5,15.2 Q12,12.8 20.5,15.2" fill="none" stroke="#444" stroke-width="1.5"/><line x1="12" y1="1" x2="12" y2="14" stroke="#444" stroke-width="1.2"/><rect x="10.4" y="3.2" width="3.2" height="7.8" rx="1.5" fill="#fff" stroke="#444" stroke-width="1"/></svg>
<div class="abs" style="left:939px;top:819px;width:6px;height:6px;border-radius:3px;background:#c8c8c8"></div>
<div class="abs" style="left:949px;top:811px;font-size:10px;line-height:12px;color:#111;white-space:nowrap;letter-spacing:0.12px;line-height:11px">Las entidades seleccionadas:<br>4 Líneas en capa "Visible".</div>
<div class="abs" style="left:1269px;top:819px;width:6px;height:6px;border-radius:3px;background:#c8c8c8"></div>
</body></html>
